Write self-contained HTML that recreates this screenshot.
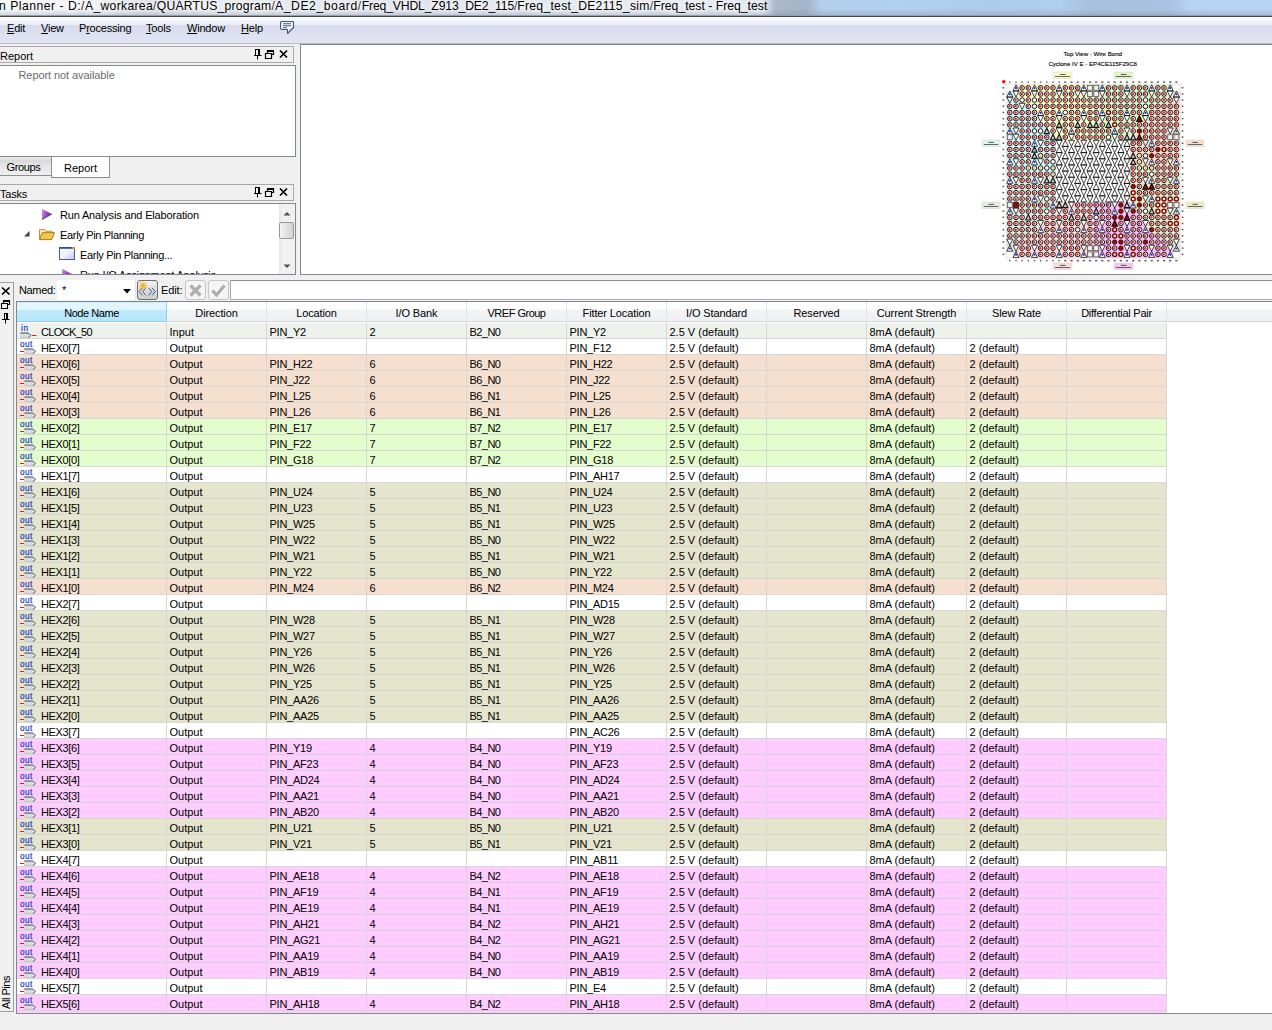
<!DOCTYPE html><html><head><meta charset="utf-8"><title>Pin Planner</title><style>
*{box-sizing:border-box;margin:0;padding:0}
html,body{width:1272px;height:1030px;overflow:hidden;background:#f0f0f0}
body{position:relative;font-family:"Liberation Sans",sans-serif;font-size:11px;color:#000;line-height:1}
.abs{position:absolute}
#title{left:0;top:0;width:1272px;height:16px;background:linear-gradient(rgba(255,255,255,0) 0,rgba(255,255,255,0) 9px,rgba(120,135,155,0.35) 16px),linear-gradient(90deg,#f7f8fa 0,#f1f3f6 90px,#dfe3e9 135px,#d9dee5 165px,#e9ecf0 200px,#e4e8ee 300px,#dde3ec 420px,#e3e8ef 560px,#e6eaf0 700px,#dde4ee 762px,#a9b8ca 776px,#a3b4c9 806px,#b3cfec 822px,#b2d0f0 900px,#adcbeb 990px,#b0ceee 1060px,#a7c1de 1090px,#a9c4e2 1170px,#b6d3f2 1190px,#b7d4f3 1272px)}
#title span{position:absolute;top:-0.2px;font-size:12.2px;white-space:pre;color:#000;text-shadow:0 0 6px #fff,0 0 6px #fff,0 0 9px #fff}
#titleline{left:0;top:15px;width:1272px;height:2px;background:linear-gradient(#a3adba 0,#8a94a2 45%,#3d424c 55%,#484d57 100%)}
#menu{left:0;top:17px;width:1272px;height:26px;background:linear-gradient(#ffffff 0,#f4f5fa 4px,#e9ebf5 8px,#d7dbed 8.5px,#dadeee 14px,#e2e5f3 26px)}
#menu span{position:absolute;top:6px;font-size:11px;white-space:nowrap;letter-spacing:-0.2px}
#menu u{text-decoration:underline}
#menuline{left:0;top:43px;width:1272px;height:1px;background:#b9bdc9}
.hdr{border:1px solid #a9a9a9;background:#f0f0f0}
.hdr span{position:absolute;left:0;top:4px;font-size:11px}
.box{border:1px solid #828790;background:#fff}
.tab{border:1px solid #8c8e94;font-size:11px;text-align:center}
.ico{position:absolute}
.tree span{position:absolute;font-size:11px;white-space:nowrap}
/* table */
.thead{position:absolute;left:17px;top:302px;width:1255px;height:20px;background:linear-gradient(#fff 0,#fff 7px,#f3f4f6 8px,#eff0f3 19px);border-bottom:1px solid #d5d5d5}
.th{position:absolute;top:0;height:19px;border-right:1px solid #e2e3e6;text-align:center}
.th span{position:absolute;left:0;right:0;top:6px;font-size:11px;letter-spacing:-0.12px}
.th.sel{background:linear-gradient(#e3f6fd 0,#dff4fc 6.500px,#bfe9fb 7.500px,#b5e4f9 19px);border-right:1px solid #8fcdeb;border-bottom:1px solid #8fcdeb;border-top:1px solid #c9ecfa;height:20px}
.th.sel span{top:5px;letter-spacing:-0.45px}
.tr{position:absolute;left:17px;width:1150px;border-right:1px solid #d6d6d6;height:16px;border-bottom:1px solid #d6d6d6;overflow:hidden}
.tr.part{border-bottom:none}
.td{position:absolute;top:0;height:16px;padding:4px 0 0 2.5px;border-left:1px solid #d6d6d6;font-size:11px;white-space:nowrap;overflow:hidden}
.nm{position:absolute;left:24px;top:4px;font-size:11px;white-space:nowrap;letter-spacing:-0.35px}
.ic{position:absolute;left:3px;top:0;width:18px;height:16px;overflow:hidden}
.chip{position:absolute}
</style></head><body>
<svg width="0" height="0" style="position:absolute"><defs><linearGradient id="pg" x1="0" y1="0" x2="1" y2="0.300"><stop offset="0" stop-color="#cf9ce6"/><stop offset="0.5" stop-color="#a050c4"/><stop offset="1" stop-color="#7a2aa0"/></linearGradient><linearGradient id="wg" x1="0" y1="0" x2="1" y2="1"><stop offset="0" stop-color="#ffffff"/><stop offset="0.5" stop-color="#eef0fb"/><stop offset="1" stop-color="#bcc6ee"/></linearGradient><linearGradient id="ag" x1="0" y1="0" x2="0" y2="1"><stop offset="0" stop-color="#aeb3b9"/><stop offset="0.45" stop-color="#e2e3e4"/><stop offset="1" stop-color="#c2c4c6"/></linearGradient><symbol id="iout" viewBox="0 0 18 16"><text x="0" y="7.800" font-family="Liberation Sans, sans-serif" font-size="8.2" fill="#1c38c4" stroke="#1c38c4" stroke-width="0.2" letter-spacing="0.45">out</text><rect x="0" y="12" width="4" height="1" fill="#e81c1c"/><path d="M4 9.500H12.700L16 12.400L12.700 15.300H4Z" fill="url(#ag)"/><path d="M4.500 10H12.500L15.700 12.400L12.700 15" fill="none" stroke="#4e5a6c" stroke-width="0.900"/></symbol><symbol id="iin" viewBox="0 0 18 16"><text x="1" y="7.800" font-family="Liberation Sans, sans-serif" font-size="8.2" fill="#1c38c4" stroke="#1c38c4" stroke-width="0.2" letter-spacing="0.8">in</text><rect x="12" y="12" width="4.500" height="1" fill="#e81c1c"/><path d="M0 9.500H8.200L11.500 12.400L8.200 15.300H0Z" fill="url(#ag)"/><path d="M0.500 10H8L11.200 12.400L8.200 15" fill="none" stroke="#4e5a6c" stroke-width="0.900"/></symbol></defs></svg>
<div id="title" class="abs"><span style="left:-1.0px;letter-spacing:0.495px">n Planner - D:/</span><span style="left:85px;letter-spacing:0.298px">A_workarea/</span><span style="left:156.7px;letter-spacing:0.211px">QUARTUS_program/</span><span style="left:275px;letter-spacing:0.562px">A_DE2_board/</span><span style="left:361.7px;letter-spacing:-0.147px">Freq_VHDL_Z913_DE2_115/</span><span style="left:517.3px;letter-spacing:0.261px">Freq_test_DE2115_sim/</span><span style="left:653.3px;letter-spacing:0.01px">Freq_test - Freq_test</span></div>
<div id="titleline" class="abs"></div>
<div id="menu" class="abs"><span style="left:7px"><u>E</u>dit</span><span style="left:41px"><u>V</u>iew</span><span style="left:79px">P<u>r</u>ocessing</span><span style="left:146px"><u>T</u>ools</span><span style="left:187px"><u>W</u>indow</span><span style="left:241px"><u>H</u>elp</span><svg class="ico" style="left:280px;top:3.500px" width="15" height="14" viewBox="0 0 15 14"><path d="M2 0.500H12.500Q13.500 0.500 13.500 1.500V6.500L7.500 12.500V8.500H2Q0.500 8.500 0.500 7V2Q0.500 0.500 2 0.500Z" fill="#eef1fb" stroke="#3f5872" stroke-width="1.100" stroke-linejoin="round"/><path d="M3 2.700H11M3 4.700H11M3 6.700H7" stroke="#3f5872" stroke-width="0.900"/></svg></div>
<div id="menuline" class="abs"></div>
<div class="abs hdr" style="left:-1px;top:46px;width:295px;height:17px"><span style="left:0px">Report</span></div>
<svg class="ico" style="left:253px;top:48px" width="36" height="12" viewBox="0 0 36 12"><path d="M2.5 2v5.5M2 1.5h5M1 7.5h7.5M4.5 8v3.5" fill="none" stroke="#000" stroke-width="1"/><rect x="5" y="1" width="2" height="6.5" fill="#000"/><path d="M14.5 2.5h6v4h-6zM14.5 3.5h6" fill="none" stroke="#000" stroke-width="1.2"/><path d="M12.5 5.5h6v5h-6z" fill="#f0f0f0" stroke="#000" stroke-width="1.2"/><path d="M27 2.5l7 7M34 2.5l-7 7" stroke="#000" stroke-width="1.7" fill="none"/></svg>
<div class="abs box" style="left:-1px;top:65px;width:297px;height:92px"><span style="position:absolute;left:18.5px;top:4px;font-size:11px;color:#6d6d6d;letter-spacing:-0.08px">Report not available</span></div>
<div class="abs tab" style="left:-1px;top:157px;width:53px;height:19px;background:linear-gradient(#ececec 0,#d9d9d9 4px,#e4e4e4 8px,#efefef 18px);border-top:none;padding:5px 4px 0 0;letter-spacing:-0.35px">Groups</div>
<div class="abs tab" style="left:51px;top:156px;width:59px;height:22px;background:#fff;padding-top:6px">Report</div>
<div class="abs hdr" style="left:-1px;top:184px;width:295px;height:17px"><span style="left:0px;letter-spacing:-0.2px">Tasks</span></div>
<svg class="ico" style="left:253px;top:186px" width="36" height="12" viewBox="0 0 36 12"><path d="M2.5 2v5.5M2 1.5h5M1 7.5h7.5M4.5 8v3.5" fill="none" stroke="#000" stroke-width="1"/><rect x="5" y="1" width="2" height="6.5" fill="#000"/><path d="M14.5 2.5h6v4h-6zM14.5 3.5h6" fill="none" stroke="#000" stroke-width="1.2"/><path d="M12.5 5.5h6v5h-6z" fill="#f0f0f0" stroke="#000" stroke-width="1.2"/><path d="M27 2.5l7 7M34 2.5l-7 7" stroke="#000" stroke-width="1.7" fill="none"/></svg>
<div class="abs box tree" style="left:-1px;top:203px;width:297px;height:72px;overflow:hidden"><svg class="ico" style="left:41px;top:4px" width="12" height="13" viewBox="0 0 12 13"><path d="M1 0.800v10.700l9.800-5.600z" fill="url(#pg)"/><path d="M1 11.500l9.800-5.600" stroke="#3c3f55" stroke-width="1.100" opacity="0.75"/></svg><span style="left:60px;top:6px;letter-spacing:-0.17px">Run Analysis and Elaboration</span><svg class="ico" style="left:23px;top:26px" width="8" height="8" viewBox="0 0 8 8"><path d="M6.5 1v5.5h-5.500z" fill="#404040"/></svg><svg class="ico" style="left:39px;top:23.500px" width="16" height="13" viewBox="0 0 17 14"><path d="M0.500 12.500v-11h5l1.500 2h7v2" fill="#fbeeb0" stroke="#b08a30" stroke-width="1"/><path d="M0.500 12.500l3-7.500h13l-3 7.500z" fill="#f5c84a" stroke="#9a7420" stroke-width="1"/></svg><span style="left:60px;top:26px;letter-spacing:-0.33px">Early Pin Planning</span><svg class="ico" style="left:59px;top:43px" width="17" height="14" viewBox="0 0 17 14"><rect x="0.500" y="0.500" width="15" height="12" fill="url(#wg)" stroke="#4a5a92"/><rect x="0.500" y="0" width="15" height="1.800" fill="#2a4cc0"/><rect x="13" y="0" width="3" height="2" fill="#f08020"/></svg><span style="left:80px;top:46px;letter-spacing:-0.33px">Early Pin Planning...</span><svg class="ico" style="left:61px;top:64px" width="12" height="13" viewBox="0 0 12 13"><path d="M1 0.800v10.700l9.800-5.600z" fill="url(#pg)"/></svg><span style="left:80px;top:66px;letter-spacing:-0.2px">Run I/O Assignment Analysis</span><div style="position:absolute;left:279px;top:0;width:16px;height:70px;background:linear-gradient(90deg,#e6e6e6,#f2f2f2 4px,#f0f0f0)"></div><svg class="ico" style="left:283px;top:6.500px" width="8" height="5" viewBox="0 0 8 5"><path d="M0.500 4.500l3.500-3.500 3.500 3.500z" fill="#505050"/></svg><div style="position:absolute;left:279px;top:18px;width:15px;height:17px;border:1px solid #9a9a9a;border-radius:2px;background:linear-gradient(90deg,#f4f4f4,#e2e2e2 50%,#d2d2d2)"></div><svg class="ico" style="left:283px;top:60px" width="8" height="5" viewBox="0 0 8 5"><path d="M0.500 0.500l3.500 3.500 3.500-3.500z" fill="#505050"/></svg></div>
<div class="abs" style="left:300px;top:44px;width:972px;height:231px;background:#fff;border-left:1px solid #828790;border-top:1px solid #828790;border-bottom:1px solid #828790"></div>
<svg class="chip" style="left:975px;top:44px" width="250" height="232" viewBox="975 44 250 232">
<rect x="1006.1" y="84.1" width="174.0" height="174.0" fill="#fff" stroke="#c8c8c8" stroke-width="0.6"/>
<polygon points="1012.9,84.4 1093.1,84.4 1093.1,140.2 1056.1,140.2 1037.6,112.5 1019.1,100.1 1012.9,90.9" fill="#f8f8c6"/>
<polygon points="1006.4,90.9 1012.9,90.9 1019.1,100.1 1037.6,112.5 1056.1,140.2 1056.1,171.1 1006.4,171.1" fill="#d6f3f3"/>
<polygon points="1093.1,84.4 1173.3,84.4 1173.3,90.9 1167.1,100.1 1148.6,112.5 1130.1,140.2 1093.1,140.2" fill="#dcf3c8"/>
<polygon points="1179.8,90.9 1173.3,90.9 1167.1,100.1 1148.6,112.5 1130.1,140.2 1130.1,171.1 1179.8,171.1" fill="#f6dcc8"/>
<polygon points="1006.4,171.1 1056.1,171.1 1056.1,201.9 1037.6,229.7 1019.1,242.1 1012.9,251.3 1006.4,251.3" fill="#dfe8dc"/>
<polygon points="1012.9,257.8 1093.1,257.8 1093.1,201.9 1056.1,201.9 1037.6,229.7 1019.1,242.1 1012.9,251.3" fill="#f9d8d8"/>
<polygon points="1093.1,257.8 1173.3,257.8 1173.3,251.3 1167.1,242.1 1148.6,229.7 1130.1,201.9 1093.1,201.9" fill="#f6c0f6"/>
<polygon points="1179.8,171.1 1130.1,171.1 1130.1,201.9 1148.6,229.7 1167.1,242.1 1173.3,251.3 1179.8,251.3" fill="#e6e6c8"/>
<g fill="#fff" stroke="#000" stroke-width="0.9"><circle cx="1022.1" cy="87.8" r="2.3"/><circle cx="1028.3" cy="87.8" r="2.3"/><circle cx="1040.6" cy="87.8" r="2.3"/><circle cx="1046.8" cy="87.8" r="2.3"/><circle cx="1053.0" cy="87.8" r="2.3"/><circle cx="1065.3" cy="87.8" r="2.3"/><circle cx="1071.5" cy="87.8" r="2.3"/><circle cx="1077.7" cy="87.8" r="2.3"/><circle cx="1108.5" cy="87.8" r="2.3"/><circle cx="1114.7" cy="87.8" r="2.3"/><circle cx="1120.9" cy="87.8" r="2.3"/><circle cx="1133.2" cy="87.8" r="2.3"/><circle cx="1139.4" cy="87.8" r="2.3"/><circle cx="1145.5" cy="87.8" r="2.3"/><circle cx="1157.9" cy="87.8" r="2.3"/><circle cx="1164.0" cy="87.8" r="2.3"/><circle cx="1022.1" cy="94.0" r="2.3"/><circle cx="1028.3" cy="94.0" r="2.3"/><circle cx="1040.6" cy="94.0" r="2.3"/><circle cx="1046.8" cy="94.0" r="2.3"/><circle cx="1053.0" cy="94.0" r="2.3"/><circle cx="1065.3" cy="94.0" r="2.3"/><circle cx="1071.5" cy="94.0" r="2.3"/><circle cx="1108.5" cy="94.0" r="2.3"/><circle cx="1114.7" cy="94.0" r="2.3"/><circle cx="1120.9" cy="94.0" r="2.3"/><circle cx="1133.2" cy="94.0" r="2.3"/><circle cx="1139.4" cy="94.0" r="2.3"/><circle cx="1145.5" cy="94.0" r="2.3"/><circle cx="1157.9" cy="94.0" r="2.3"/><circle cx="1164.0" cy="94.0" r="2.3"/><circle cx="1016.0" cy="100.1" r="2.3"/><circle cx="1022.1" cy="100.1" r="2.3"/><circle cx="1028.3" cy="100.1" r="2.3"/><circle cx="1034.5" cy="100.1" r="2.3"/><circle cx="1040.6" cy="100.1" r="2.3"/><circle cx="1046.8" cy="100.1" r="2.3"/><circle cx="1053.0" cy="100.1" r="2.3"/><circle cx="1059.2" cy="100.1" r="2.3"/><circle cx="1065.3" cy="100.1" r="2.3"/><circle cx="1071.5" cy="100.1" r="2.3"/><circle cx="1077.7" cy="100.1" r="2.3"/><circle cx="1083.8" cy="100.1" r="2.3"/><circle cx="1090.0" cy="100.1" r="2.3"/><circle cx="1096.2" cy="100.1" r="2.3"/><circle cx="1102.3" cy="100.1" r="2.3"/><circle cx="1108.5" cy="100.1" r="2.3"/><circle cx="1114.7" cy="100.1" r="2.3"/><circle cx="1120.9" cy="100.1" r="2.3"/><circle cx="1127.0" cy="100.1" r="2.3"/><circle cx="1133.2" cy="100.1" r="2.3"/><circle cx="1139.4" cy="100.1" r="2.3"/><circle cx="1145.5" cy="100.1" r="2.3"/><circle cx="1151.7" cy="100.1" r="2.3"/><circle cx="1157.9" cy="100.1" r="2.3"/><circle cx="1164.0" cy="100.1" r="2.3"/><circle cx="1170.2" cy="100.1" r="2.3"/><circle cx="1009.8" cy="106.3" r="2.3"/><circle cx="1016.0" cy="106.3" r="2.3"/><circle cx="1028.3" cy="106.3" r="2.3"/><circle cx="1034.5" cy="106.3" r="2.3"/><circle cx="1040.6" cy="106.3" r="2.3"/><circle cx="1046.8" cy="106.3" r="2.3"/><circle cx="1053.0" cy="106.3" r="2.3"/><circle cx="1059.2" cy="106.3" r="2.3"/><circle cx="1065.3" cy="106.3" r="2.3"/><circle cx="1071.5" cy="106.3" r="2.3"/><circle cx="1077.7" cy="106.3" r="2.3"/><circle cx="1083.8" cy="106.3" r="2.3"/><circle cx="1090.0" cy="106.3" r="2.3"/><circle cx="1096.2" cy="106.3" r="2.3"/><circle cx="1102.3" cy="106.3" r="2.3"/><circle cx="1108.5" cy="106.3" r="2.3"/><circle cx="1114.7" cy="106.3" r="2.3"/><circle cx="1120.9" cy="106.3" r="2.3"/><circle cx="1127.0" cy="106.3" r="2.3"/><circle cx="1133.2" cy="106.3" r="2.3"/><circle cx="1139.4" cy="106.3" r="2.3"/><circle cx="1145.5" cy="106.3" r="2.3"/><circle cx="1151.7" cy="106.3" r="2.3"/><circle cx="1157.9" cy="106.3" r="2.3"/><circle cx="1164.0" cy="106.3" r="2.3"/><circle cx="1170.2" cy="106.3" r="2.3"/><circle cx="1176.4" cy="106.3" r="2.3"/><circle cx="1009.8" cy="112.5" r="2.3"/><circle cx="1016.0" cy="112.5" r="2.3"/><circle cx="1022.1" cy="112.5" r="2.3"/><circle cx="1028.3" cy="112.5" r="2.3"/><circle cx="1034.5" cy="112.5" r="2.3"/><circle cx="1046.8" cy="112.5" r="2.3"/><circle cx="1053.0" cy="112.5" r="2.3"/><circle cx="1065.3" cy="112.5" r="2.3"/><circle cx="1071.5" cy="112.5" r="2.3"/><circle cx="1077.7" cy="112.5" r="2.3"/><circle cx="1090.0" cy="112.5" r="2.3"/><circle cx="1096.2" cy="112.5" r="2.3"/><circle cx="1114.7" cy="112.5" r="2.3"/><circle cx="1120.9" cy="112.5" r="2.3"/><circle cx="1133.2" cy="112.5" r="2.3"/><circle cx="1139.4" cy="112.5" r="2.3"/><circle cx="1151.7" cy="112.5" r="2.3"/><circle cx="1157.9" cy="112.5" r="2.3"/><circle cx="1164.0" cy="112.5" r="2.3"/><circle cx="1170.2" cy="112.5" r="2.3"/><circle cx="1176.4" cy="112.5" r="2.3"/><circle cx="1009.8" cy="118.7" r="2.3"/><circle cx="1016.0" cy="118.7" r="2.3"/><circle cx="1022.1" cy="118.7" r="2.3"/><circle cx="1028.3" cy="118.7" r="2.3"/><circle cx="1034.5" cy="118.7" r="2.3"/><circle cx="1046.8" cy="118.7" r="2.3"/><circle cx="1053.0" cy="118.7" r="2.3"/><circle cx="1065.3" cy="118.7" r="2.3"/><circle cx="1071.5" cy="118.7" r="2.3"/><circle cx="1077.7" cy="118.7" r="2.3"/><circle cx="1090.0" cy="118.7" r="2.3"/><circle cx="1096.2" cy="118.7" r="2.3"/><circle cx="1108.5" cy="118.7" r="2.3"/><circle cx="1114.7" cy="118.7" r="2.3"/><circle cx="1120.9" cy="118.7" r="2.3"/><circle cx="1133.2" cy="118.7" r="2.3"/><circle cx="1151.7" cy="118.7" r="2.3"/><circle cx="1157.9" cy="118.7" r="2.3"/><circle cx="1164.0" cy="118.7" r="2.3"/><circle cx="1170.2" cy="118.7" r="2.3"/><circle cx="1176.4" cy="118.7" r="2.3"/><circle cx="1009.8" cy="124.8" r="2.3"/><circle cx="1016.0" cy="124.8" r="2.3"/><circle cx="1022.1" cy="124.8" r="2.3"/><circle cx="1028.3" cy="124.8" r="2.3"/><circle cx="1034.5" cy="124.8" r="2.3"/><circle cx="1040.6" cy="124.8" r="2.3"/><circle cx="1046.8" cy="124.8" r="2.3"/><circle cx="1053.0" cy="124.8" r="2.3"/><circle cx="1065.3" cy="124.8" r="2.3"/><circle cx="1071.5" cy="124.8" r="2.3"/><circle cx="1083.8" cy="124.8" r="2.3"/><circle cx="1102.3" cy="124.8" r="2.3"/><circle cx="1120.9" cy="124.8" r="2.3"/><circle cx="1127.0" cy="124.8" r="2.3"/><circle cx="1133.2" cy="124.8" r="2.3"/><circle cx="1139.4" cy="124.8" r="2.3"/><circle cx="1145.5" cy="124.8" r="2.3"/><circle cx="1151.7" cy="124.8" r="2.3"/><circle cx="1157.9" cy="124.8" r="2.3"/><circle cx="1164.0" cy="124.8" r="2.3"/><circle cx="1170.2" cy="124.8" r="2.3"/><circle cx="1176.4" cy="124.8" r="2.3"/><circle cx="1022.1" cy="131.0" r="2.3"/><circle cx="1028.3" cy="131.0" r="2.3"/><circle cx="1034.5" cy="131.0" r="2.3"/><circle cx="1040.6" cy="131.0" r="2.3"/><circle cx="1053.0" cy="131.0" r="2.3"/><circle cx="1065.3" cy="131.0" r="2.3"/><circle cx="1077.7" cy="131.0" r="2.3"/><circle cx="1083.8" cy="131.0" r="2.3"/><circle cx="1090.0" cy="131.0" r="2.3"/><circle cx="1096.2" cy="131.0" r="2.3"/><circle cx="1102.3" cy="131.0" r="2.3"/><circle cx="1108.5" cy="131.0" r="2.3"/><circle cx="1120.9" cy="131.0" r="2.3"/><circle cx="1133.2" cy="131.0" r="2.3"/><circle cx="1145.5" cy="131.0" r="2.3"/><circle cx="1151.7" cy="131.0" r="2.3"/><circle cx="1157.9" cy="131.0" r="2.3"/><circle cx="1164.0" cy="131.0" r="2.3"/><circle cx="1022.1" cy="137.2" r="2.3"/><circle cx="1028.3" cy="137.2" r="2.3"/><circle cx="1034.5" cy="137.2" r="2.3"/><circle cx="1040.6" cy="137.2" r="2.3"/><circle cx="1046.8" cy="137.2" r="2.3"/><circle cx="1065.3" cy="137.2" r="2.3"/><circle cx="1077.7" cy="137.2" r="2.3"/><circle cx="1083.8" cy="137.2" r="2.3"/><circle cx="1090.0" cy="137.2" r="2.3"/><circle cx="1096.2" cy="137.2" r="2.3"/><circle cx="1102.3" cy="137.2" r="2.3"/><circle cx="1108.5" cy="137.2" r="2.3"/><circle cx="1120.9" cy="137.2" r="2.3"/><circle cx="1145.5" cy="137.2" r="2.3"/><circle cx="1151.7" cy="137.2" r="2.3"/><circle cx="1157.9" cy="137.2" r="2.3"/><circle cx="1164.0" cy="137.2" r="2.3"/><circle cx="1009.8" cy="143.3" r="2.3"/><circle cx="1016.0" cy="143.3" r="2.3"/><circle cx="1022.1" cy="143.3" r="2.3"/><circle cx="1028.3" cy="143.3" r="2.3"/><circle cx="1046.8" cy="143.3" r="2.3"/><circle cx="1053.0" cy="143.3" r="2.3"/><circle cx="1133.2" cy="143.3" r="2.3"/><circle cx="1139.4" cy="143.3" r="2.3"/><circle cx="1157.9" cy="143.3" r="2.3"/><circle cx="1164.0" cy="143.3" r="2.3"/><circle cx="1170.2" cy="143.3" r="2.3"/><circle cx="1176.4" cy="143.3" r="2.3"/><circle cx="1009.8" cy="149.5" r="2.3"/><circle cx="1016.0" cy="149.5" r="2.3"/><circle cx="1022.1" cy="149.5" r="2.3"/><circle cx="1028.3" cy="149.5" r="2.3"/><circle cx="1040.6" cy="149.5" r="2.3"/><circle cx="1046.8" cy="149.5" r="2.3"/><circle cx="1053.0" cy="149.5" r="2.3"/><circle cx="1133.2" cy="149.5" r="2.3"/><circle cx="1139.4" cy="149.5" r="2.3"/><circle cx="1145.5" cy="149.5" r="2.3"/><circle cx="1151.7" cy="149.5" r="2.3"/><circle cx="1170.2" cy="149.5" r="2.3"/><circle cx="1176.4" cy="149.5" r="2.3"/><circle cx="1009.8" cy="155.7" r="2.3"/><circle cx="1016.0" cy="155.7" r="2.3"/><circle cx="1022.1" cy="155.7" r="2.3"/><circle cx="1028.3" cy="155.7" r="2.3"/><circle cx="1040.6" cy="155.7" r="2.3"/><circle cx="1046.8" cy="155.7" r="2.3"/><circle cx="1053.0" cy="155.7" r="2.3"/><circle cx="1139.4" cy="155.7" r="2.3"/><circle cx="1145.5" cy="155.7" r="2.3"/><circle cx="1157.9" cy="155.7" r="2.3"/><circle cx="1164.0" cy="155.7" r="2.3"/><circle cx="1170.2" cy="155.7" r="2.3"/><circle cx="1176.4" cy="155.7" r="2.3"/><circle cx="1022.1" cy="161.8" r="2.3"/><circle cx="1028.3" cy="161.8" r="2.3"/><circle cx="1046.8" cy="161.8" r="2.3"/><circle cx="1053.0" cy="161.8" r="2.3"/><circle cx="1139.4" cy="161.8" r="2.3"/><circle cx="1157.9" cy="161.8" r="2.3"/><circle cx="1164.0" cy="161.8" r="2.3"/><circle cx="1009.8" cy="168.0" r="2.3"/><circle cx="1016.0" cy="168.0" r="2.3"/><circle cx="1022.1" cy="168.0" r="2.3"/><circle cx="1028.3" cy="168.0" r="2.3"/><circle cx="1034.5" cy="168.0" r="2.3"/><circle cx="1040.6" cy="168.0" r="2.3"/><circle cx="1046.8" cy="168.0" r="2.3"/><circle cx="1053.0" cy="168.0" r="2.3"/><circle cx="1133.2" cy="168.0" r="2.3"/><circle cx="1139.4" cy="168.0" r="2.3"/><circle cx="1145.5" cy="168.0" r="2.3"/><circle cx="1151.7" cy="168.0" r="2.3"/><circle cx="1157.9" cy="168.0" r="2.3"/><circle cx="1164.0" cy="168.0" r="2.3"/><circle cx="1170.2" cy="168.0" r="2.3"/><circle cx="1176.4" cy="168.0" r="2.3"/><circle cx="1009.8" cy="174.2" r="2.3"/><circle cx="1016.0" cy="174.2" r="2.3"/><circle cx="1022.1" cy="174.2" r="2.3"/><circle cx="1028.3" cy="174.2" r="2.3"/><circle cx="1034.5" cy="174.2" r="2.3"/><circle cx="1040.6" cy="174.2" r="2.3"/><circle cx="1046.8" cy="174.2" r="2.3"/><circle cx="1053.0" cy="174.2" r="2.3"/><circle cx="1133.2" cy="174.2" r="2.3"/><circle cx="1139.4" cy="174.2" r="2.3"/><circle cx="1145.5" cy="174.2" r="2.3"/><circle cx="1151.7" cy="174.2" r="2.3"/><circle cx="1157.9" cy="174.2" r="2.3"/><circle cx="1164.0" cy="174.2" r="2.3"/><circle cx="1170.2" cy="174.2" r="2.3"/><circle cx="1176.4" cy="174.2" r="2.3"/><circle cx="1022.1" cy="180.3" r="2.3"/><circle cx="1028.3" cy="180.3" r="2.3"/><circle cx="1133.2" cy="180.3" r="2.3"/><circle cx="1139.4" cy="180.3" r="2.3"/><circle cx="1157.9" cy="180.3" r="2.3"/><circle cx="1164.0" cy="180.3" r="2.3"/><circle cx="1009.8" cy="186.5" r="2.3"/><circle cx="1016.0" cy="186.5" r="2.3"/><circle cx="1022.1" cy="186.5" r="2.3"/><circle cx="1028.3" cy="186.5" r="2.3"/><circle cx="1034.5" cy="186.5" r="2.3"/><circle cx="1040.6" cy="186.5" r="2.3"/><circle cx="1046.8" cy="186.5" r="2.3"/><circle cx="1053.0" cy="186.5" r="2.3"/><circle cx="1139.4" cy="186.5" r="2.3"/><circle cx="1157.9" cy="186.5" r="2.3"/><circle cx="1164.0" cy="186.5" r="2.3"/><circle cx="1170.2" cy="186.5" r="2.3"/><circle cx="1176.4" cy="186.5" r="2.3"/><circle cx="1009.8" cy="192.7" r="2.3"/><circle cx="1016.0" cy="192.7" r="2.3"/><circle cx="1022.1" cy="192.7" r="2.3"/><circle cx="1028.3" cy="192.7" r="2.3"/><circle cx="1034.5" cy="192.7" r="2.3"/><circle cx="1040.6" cy="192.7" r="2.3"/><circle cx="1046.8" cy="192.7" r="2.3"/><circle cx="1053.0" cy="192.7" r="2.3"/><circle cx="1139.4" cy="192.7" r="2.3"/><circle cx="1145.5" cy="192.7" r="2.3"/><circle cx="1151.7" cy="192.7" r="2.3"/><circle cx="1157.9" cy="192.7" r="2.3"/><circle cx="1164.0" cy="192.7" r="2.3"/><circle cx="1170.2" cy="192.7" r="2.3"/><circle cx="1176.4" cy="192.7" r="2.3"/><circle cx="1009.8" cy="198.9" r="2.3"/><circle cx="1016.0" cy="198.9" r="2.3"/><circle cx="1022.1" cy="198.9" r="2.3"/><circle cx="1028.3" cy="198.9" r="2.3"/><circle cx="1046.8" cy="198.9" r="2.3"/><circle cx="1053.0" cy="198.9" r="2.3"/><circle cx="1022.1" cy="205.0" r="2.3"/><circle cx="1028.3" cy="205.0" r="2.3"/><circle cx="1034.5" cy="205.0" r="2.3"/><circle cx="1040.6" cy="205.0" r="2.3"/><circle cx="1046.8" cy="205.0" r="2.3"/><circle cx="1077.7" cy="205.0" r="2.3"/><circle cx="1083.8" cy="205.0" r="2.3"/><circle cx="1090.0" cy="205.0" r="2.3"/><circle cx="1096.2" cy="205.0" r="2.3"/><circle cx="1102.3" cy="205.0" r="2.3"/><circle cx="1108.5" cy="205.0" r="2.3"/><circle cx="1145.5" cy="205.0" r="2.3"/><circle cx="1151.7" cy="205.0" r="2.3"/><circle cx="1022.1" cy="211.2" r="2.3"/><circle cx="1028.3" cy="211.2" r="2.3"/><circle cx="1034.5" cy="211.2" r="2.3"/><circle cx="1040.6" cy="211.2" r="2.3"/><circle cx="1046.8" cy="211.2" r="2.3"/><circle cx="1053.0" cy="211.2" r="2.3"/><circle cx="1065.3" cy="211.2" r="2.3"/><circle cx="1077.7" cy="211.2" r="2.3"/><circle cx="1083.8" cy="211.2" r="2.3"/><circle cx="1090.0" cy="211.2" r="2.3"/><circle cx="1102.3" cy="211.2" r="2.3"/><circle cx="1108.5" cy="211.2" r="2.3"/><circle cx="1139.4" cy="211.2" r="2.3"/><circle cx="1145.5" cy="211.2" r="2.3"/><circle cx="1009.8" cy="217.4" r="2.3"/><circle cx="1016.0" cy="217.4" r="2.3"/><circle cx="1022.1" cy="217.4" r="2.3"/><circle cx="1034.5" cy="217.4" r="2.3"/><circle cx="1040.6" cy="217.4" r="2.3"/><circle cx="1046.8" cy="217.4" r="2.3"/><circle cx="1053.0" cy="217.4" r="2.3"/><circle cx="1059.2" cy="217.4" r="2.3"/><circle cx="1065.3" cy="217.4" r="2.3"/><circle cx="1077.7" cy="217.4" r="2.3"/><circle cx="1090.0" cy="217.4" r="2.3"/><circle cx="1096.2" cy="217.4" r="2.3"/><circle cx="1102.3" cy="217.4" r="2.3"/><circle cx="1108.5" cy="217.4" r="2.3"/><circle cx="1133.2" cy="217.4" r="2.3"/><circle cx="1139.4" cy="217.4" r="2.3"/><circle cx="1145.5" cy="217.4" r="2.3"/><circle cx="1151.7" cy="217.4" r="2.3"/><circle cx="1157.9" cy="217.4" r="2.3"/><circle cx="1164.0" cy="217.4" r="2.3"/><circle cx="1170.2" cy="217.4" r="2.3"/><circle cx="1009.8" cy="223.5" r="2.3"/><circle cx="1016.0" cy="223.5" r="2.3"/><circle cx="1022.1" cy="223.5" r="2.3"/><circle cx="1028.3" cy="223.5" r="2.3"/><circle cx="1034.5" cy="223.5" r="2.3"/><circle cx="1046.8" cy="223.5" r="2.3"/><circle cx="1053.0" cy="223.5" r="2.3"/><circle cx="1065.3" cy="223.5" r="2.3"/><circle cx="1071.5" cy="223.5" r="2.3"/><circle cx="1077.7" cy="223.5" r="2.3"/><circle cx="1090.0" cy="223.5" r="2.3"/><circle cx="1096.2" cy="223.5" r="2.3"/><circle cx="1108.5" cy="223.5" r="2.3"/><circle cx="1120.9" cy="223.5" r="2.3"/><circle cx="1133.2" cy="223.5" r="2.3"/><circle cx="1139.4" cy="223.5" r="2.3"/><circle cx="1151.7" cy="223.5" r="2.3"/><circle cx="1157.9" cy="223.5" r="2.3"/><circle cx="1164.0" cy="223.5" r="2.3"/><circle cx="1009.8" cy="229.7" r="2.3"/><circle cx="1016.0" cy="229.7" r="2.3"/><circle cx="1022.1" cy="229.7" r="2.3"/><circle cx="1028.3" cy="229.7" r="2.3"/><circle cx="1034.5" cy="229.7" r="2.3"/><circle cx="1046.8" cy="229.7" r="2.3"/><circle cx="1053.0" cy="229.7" r="2.3"/><circle cx="1065.3" cy="229.7" r="2.3"/><circle cx="1071.5" cy="229.7" r="2.3"/><circle cx="1077.7" cy="229.7" r="2.3"/><circle cx="1090.0" cy="229.7" r="2.3"/><circle cx="1096.2" cy="229.7" r="2.3"/><circle cx="1108.5" cy="229.7" r="2.3"/><circle cx="1120.9" cy="229.7" r="2.3"/><circle cx="1133.2" cy="229.7" r="2.3"/><circle cx="1139.4" cy="229.7" r="2.3"/><circle cx="1157.9" cy="229.7" r="2.3"/><circle cx="1164.0" cy="229.7" r="2.3"/><circle cx="1170.2" cy="229.7" r="2.3"/><circle cx="1176.4" cy="229.7" r="2.3"/><circle cx="1009.8" cy="235.9" r="2.3"/><circle cx="1016.0" cy="235.9" r="2.3"/><circle cx="1022.1" cy="235.9" r="2.3"/><circle cx="1028.3" cy="235.9" r="2.3"/><circle cx="1034.5" cy="235.9" r="2.3"/><circle cx="1040.6" cy="235.9" r="2.3"/><circle cx="1046.8" cy="235.9" r="2.3"/><circle cx="1053.0" cy="235.9" r="2.3"/><circle cx="1059.2" cy="235.9" r="2.3"/><circle cx="1065.3" cy="235.9" r="2.3"/><circle cx="1071.5" cy="235.9" r="2.3"/><circle cx="1077.7" cy="235.9" r="2.3"/><circle cx="1083.8" cy="235.9" r="2.3"/><circle cx="1090.0" cy="235.9" r="2.3"/><circle cx="1096.2" cy="235.9" r="2.3"/><circle cx="1102.3" cy="235.9" r="2.3"/><circle cx="1108.5" cy="235.9" r="2.3"/><circle cx="1127.0" cy="235.9" r="2.3"/><circle cx="1133.2" cy="235.9" r="2.3"/><circle cx="1139.4" cy="235.9" r="2.3"/><circle cx="1145.5" cy="235.9" r="2.3"/><circle cx="1151.7" cy="235.9" r="2.3"/><circle cx="1157.9" cy="235.9" r="2.3"/><circle cx="1164.0" cy="235.9" r="2.3"/><circle cx="1170.2" cy="235.9" r="2.3"/><circle cx="1176.4" cy="235.9" r="2.3"/><circle cx="1016.0" cy="242.1" r="2.3"/><circle cx="1022.1" cy="242.1" r="2.3"/><circle cx="1028.3" cy="242.1" r="2.3"/><circle cx="1034.5" cy="242.1" r="2.3"/><circle cx="1040.6" cy="242.1" r="2.3"/><circle cx="1046.8" cy="242.1" r="2.3"/><circle cx="1053.0" cy="242.1" r="2.3"/><circle cx="1059.2" cy="242.1" r="2.3"/><circle cx="1065.3" cy="242.1" r="2.3"/><circle cx="1071.5" cy="242.1" r="2.3"/><circle cx="1077.7" cy="242.1" r="2.3"/><circle cx="1083.8" cy="242.1" r="2.3"/><circle cx="1090.0" cy="242.1" r="2.3"/><circle cx="1096.2" cy="242.1" r="2.3"/><circle cx="1102.3" cy="242.1" r="2.3"/><circle cx="1108.5" cy="242.1" r="2.3"/><circle cx="1127.0" cy="242.1" r="2.3"/><circle cx="1133.2" cy="242.1" r="2.3"/><circle cx="1139.4" cy="242.1" r="2.3"/><circle cx="1151.7" cy="242.1" r="2.3"/><circle cx="1157.9" cy="242.1" r="2.3"/><circle cx="1164.0" cy="242.1" r="2.3"/><circle cx="1170.2" cy="242.1" r="2.3"/><circle cx="1022.1" cy="248.2" r="2.3"/><circle cx="1028.3" cy="248.2" r="2.3"/><circle cx="1040.6" cy="248.2" r="2.3"/><circle cx="1046.8" cy="248.2" r="2.3"/><circle cx="1053.0" cy="248.2" r="2.3"/><circle cx="1065.3" cy="248.2" r="2.3"/><circle cx="1071.5" cy="248.2" r="2.3"/><circle cx="1077.7" cy="248.2" r="2.3"/><circle cx="1108.5" cy="248.2" r="2.3"/><circle cx="1114.7" cy="248.2" r="2.3"/><circle cx="1139.4" cy="248.2" r="2.3"/><circle cx="1145.5" cy="248.2" r="2.3"/><circle cx="1157.9" cy="248.2" r="2.3"/><circle cx="1164.0" cy="248.2" r="2.3"/><circle cx="1022.1" cy="254.4" r="2.3"/><circle cx="1028.3" cy="254.4" r="2.3"/><circle cx="1040.6" cy="254.4" r="2.3"/><circle cx="1046.8" cy="254.4" r="2.3"/><circle cx="1053.0" cy="254.4" r="2.3"/><circle cx="1065.3" cy="254.4" r="2.3"/><circle cx="1071.5" cy="254.4" r="2.3"/><circle cx="1077.7" cy="254.4" r="2.3"/><circle cx="1108.5" cy="254.4" r="2.3"/><circle cx="1139.4" cy="254.4" r="2.3"/><circle cx="1145.5" cy="254.4" r="2.3"/><circle cx="1157.9" cy="254.4" r="2.3"/><circle cx="1164.0" cy="254.4" r="2.3"/></g>
<path fill="#fff" stroke="#000" stroke-width="0.72" stroke-linejoin="miter" d="M1013.0 90.8L1016.0 84.8L1019.0 90.8ZM1031.5 90.8L1034.5 84.8L1037.5 90.8ZM1056.2 90.8L1059.2 84.8L1062.2 90.8ZM1080.8 90.8L1083.8 84.8L1086.8 90.8ZM1099.3 90.8L1102.3 84.8L1105.3 90.8ZM1124.0 90.8L1127.0 84.8L1130.0 90.8ZM1148.7 90.8L1151.7 84.8L1154.7 90.8ZM1167.2 90.8L1170.2 84.8L1173.2 90.8ZM1006.8 97.0L1009.8 91.0L1012.8 97.0ZM1013.0 91.0L1016.0 97.0L1019.0 91.0ZM1031.5 91.0L1034.5 97.0L1037.5 91.0ZM1056.2 91.0L1059.2 97.0L1062.2 91.0ZM1074.7 91.0L1077.7 97.0L1080.7 91.0ZM1080.8 91.0L1083.8 97.0L1086.8 91.0ZM1099.3 91.0L1102.3 97.0L1105.3 91.0ZM1124.0 91.0L1127.0 97.0L1130.0 91.0ZM1148.7 91.0L1151.7 97.0L1154.7 91.0ZM1167.2 91.0L1170.2 97.0L1173.2 91.0ZM1173.4 97.0L1176.4 91.0L1179.4 97.0ZM1006.8 97.1L1009.8 103.1L1012.8 97.1ZM1173.4 97.1L1176.4 103.1L1179.4 97.1ZM1019.1 103.3L1022.1 109.3L1025.1 103.3ZM1037.6 115.5L1040.6 109.5L1043.6 115.5ZM1056.2 115.5L1059.2 109.5L1062.2 115.5ZM1080.8 115.5L1083.8 109.5L1086.8 115.5ZM1099.3 115.5L1102.3 109.5L1105.3 115.5ZM1124.0 115.5L1127.0 109.5L1130.0 115.5ZM1142.5 115.5L1145.5 109.5L1148.5 115.5ZM1037.6 115.7L1040.6 121.7L1043.6 115.7ZM1056.2 115.7L1059.2 121.7L1062.2 115.7ZM1080.8 115.7L1083.8 121.7L1086.8 115.7ZM1099.3 115.7L1102.3 121.7L1105.3 115.7ZM1124.0 115.7L1127.0 121.7L1130.0 115.7ZM1142.5 115.7L1145.5 121.7L1148.5 115.7ZM1006.8 134.0L1009.8 128.0L1012.8 134.0ZM1013.0 128.0L1016.0 134.0L1019.0 128.0ZM1056.2 128.0L1059.2 134.0L1062.2 128.0ZM1068.5 134.0L1071.5 128.0L1074.5 134.0ZM1111.7 134.0L1114.7 128.0L1117.7 134.0ZM1124.0 128.0L1127.0 134.0L1130.0 128.0ZM1167.2 128.0L1170.2 134.0L1173.2 128.0ZM1173.4 134.0L1176.4 128.0L1179.4 134.0ZM1013.0 134.2L1016.0 140.2L1019.0 134.2ZM1068.5 134.2L1071.5 140.2L1074.5 134.2ZM1111.7 134.2L1114.7 140.2L1117.7 134.2ZM1031.5 146.3L1034.5 140.3L1037.5 146.3ZM1037.6 140.3L1040.6 146.3L1043.6 140.3ZM1056.2 140.3L1059.2 146.3L1062.2 140.3ZM1062.3 146.3L1065.3 140.3L1068.3 146.3ZM1068.5 140.3L1071.5 146.3L1074.5 140.3ZM1074.7 146.3L1077.7 140.3L1080.7 146.3ZM1080.8 140.3L1083.8 146.3L1086.8 140.3ZM1087.0 146.3L1090.0 140.3L1093.0 146.3ZM1093.2 140.3L1096.2 146.3L1099.2 140.3ZM1099.3 146.3L1102.3 140.3L1105.3 146.3ZM1105.5 140.3L1108.5 146.3L1111.5 140.3ZM1111.7 146.3L1114.7 140.3L1117.7 146.3ZM1117.9 140.3L1120.9 146.3L1123.9 140.3ZM1124.0 146.3L1127.0 140.3L1130.0 146.3ZM1142.5 140.3L1145.5 146.3L1148.5 140.3ZM1148.7 146.3L1151.7 140.3L1154.7 146.3ZM1056.2 152.5L1059.2 146.5L1062.2 152.5ZM1062.3 146.5L1065.3 152.5L1068.3 146.5ZM1068.5 152.5L1071.5 146.5L1074.5 152.5ZM1074.7 146.5L1077.7 152.5L1080.7 146.5ZM1080.8 152.5L1083.8 146.5L1086.8 152.5ZM1087.0 146.5L1090.0 152.5L1093.0 146.5ZM1093.2 152.5L1096.2 146.5L1099.2 152.5ZM1099.3 146.5L1102.3 152.5L1105.3 146.5ZM1105.5 152.5L1108.5 146.5L1111.5 152.5ZM1111.7 146.5L1114.7 152.5L1117.7 146.5ZM1117.9 152.5L1120.9 146.5L1123.9 152.5ZM1124.0 146.5L1127.0 152.5L1130.0 146.5ZM1056.2 152.7L1059.2 158.7L1062.2 152.7ZM1062.3 158.7L1065.3 152.7L1068.3 158.7ZM1068.5 152.7L1071.5 158.7L1074.5 152.7ZM1074.7 158.7L1077.7 152.7L1080.7 158.7ZM1080.8 152.7L1083.8 158.7L1086.8 152.7ZM1087.0 158.7L1090.0 152.7L1093.0 158.7ZM1093.2 152.7L1096.2 158.7L1099.2 152.7ZM1099.3 158.7L1102.3 152.7L1105.3 158.7ZM1105.5 152.7L1108.5 158.7L1111.5 152.7ZM1111.7 158.7L1114.7 152.7L1117.7 158.7ZM1117.9 152.7L1120.9 158.7L1123.9 152.7ZM1124.0 158.7L1127.0 152.7L1130.0 158.7ZM1006.8 164.8L1009.8 158.8L1012.8 164.8ZM1013.0 158.8L1016.0 164.8L1019.0 158.8ZM1031.5 164.8L1034.5 158.8L1037.5 164.8ZM1037.6 158.8L1040.6 164.8L1043.6 158.8ZM1056.2 164.8L1059.2 158.8L1062.2 164.8ZM1062.3 158.8L1065.3 164.8L1068.3 158.8ZM1068.5 164.8L1071.5 158.8L1074.5 164.8ZM1074.7 158.8L1077.7 164.8L1080.7 158.8ZM1080.8 164.8L1083.8 158.8L1086.8 164.8ZM1087.0 158.8L1090.0 164.8L1093.0 158.8ZM1093.2 164.8L1096.2 158.8L1099.2 164.8ZM1099.3 158.8L1102.3 164.8L1105.3 158.8ZM1105.5 164.8L1108.5 158.8L1111.5 164.8ZM1111.7 158.8L1114.7 164.8L1117.7 158.8ZM1117.9 164.8L1120.9 158.8L1123.9 164.8ZM1124.0 158.8L1127.0 164.8L1130.0 158.8ZM1142.5 158.8L1145.5 164.8L1148.5 158.8ZM1148.7 164.8L1151.7 158.8L1154.7 164.8ZM1167.2 158.8L1170.2 164.8L1173.2 158.8ZM1173.4 164.8L1176.4 158.8L1179.4 164.8ZM1056.2 165.0L1059.2 171.0L1062.2 165.0ZM1062.3 171.0L1065.3 165.0L1068.3 171.0ZM1068.5 165.0L1071.5 171.0L1074.5 165.0ZM1074.7 171.0L1077.7 165.0L1080.7 171.0ZM1080.8 165.0L1083.8 171.0L1086.8 165.0ZM1087.0 171.0L1090.0 165.0L1093.0 171.0ZM1093.2 165.0L1096.2 171.0L1099.2 165.0ZM1099.3 171.0L1102.3 165.0L1105.3 171.0ZM1105.5 165.0L1108.5 171.0L1111.5 165.0ZM1111.7 171.0L1114.7 165.0L1117.7 171.0ZM1117.9 165.0L1120.9 171.0L1123.9 165.0ZM1124.0 171.0L1127.0 165.0L1130.0 171.0ZM1056.2 177.2L1059.2 171.2L1062.2 177.2ZM1062.3 171.2L1065.3 177.2L1068.3 171.2ZM1068.5 177.2L1071.5 171.2L1074.5 177.2ZM1074.7 171.2L1077.7 177.2L1080.7 171.2ZM1080.8 177.2L1083.8 171.2L1086.8 177.2ZM1087.0 171.2L1090.0 177.2L1093.0 171.2ZM1093.2 177.2L1096.2 171.2L1099.2 177.2ZM1099.3 171.2L1102.3 177.2L1105.3 171.2ZM1105.5 177.2L1108.5 171.2L1111.5 177.2ZM1111.7 171.2L1114.7 177.2L1117.7 171.2ZM1117.9 177.2L1120.9 171.2L1123.9 177.2ZM1124.0 171.2L1127.0 177.2L1130.0 171.2ZM1006.8 183.3L1009.8 177.3L1012.8 183.3ZM1013.0 177.3L1016.0 183.3L1019.0 177.3ZM1031.5 183.3L1034.5 177.3L1037.5 183.3ZM1037.6 177.3L1040.6 183.3L1043.6 177.3ZM1056.2 177.3L1059.2 183.3L1062.2 177.3ZM1062.3 183.3L1065.3 177.3L1068.3 183.3ZM1068.5 177.3L1071.5 183.3L1074.5 177.3ZM1074.7 183.3L1077.7 177.3L1080.7 183.3ZM1080.8 177.3L1083.8 183.3L1086.8 177.3ZM1087.0 183.3L1090.0 177.3L1093.0 183.3ZM1093.2 177.3L1096.2 183.3L1099.2 177.3ZM1099.3 183.3L1102.3 177.3L1105.3 183.3ZM1105.5 177.3L1108.5 183.3L1111.5 177.3ZM1111.7 183.3L1114.7 177.3L1117.7 183.3ZM1117.9 177.3L1120.9 183.3L1123.9 177.3ZM1124.0 183.3L1127.0 177.3L1130.0 183.3ZM1142.5 177.3L1145.5 183.3L1148.5 177.3ZM1148.7 183.3L1151.7 177.3L1154.7 183.3ZM1167.2 177.3L1170.2 183.3L1173.2 177.3ZM1173.4 183.3L1176.4 177.3L1179.4 183.3ZM1056.2 189.5L1059.2 183.5L1062.2 189.5ZM1062.3 183.5L1065.3 189.5L1068.3 183.5ZM1068.5 189.5L1071.5 183.5L1074.5 189.5ZM1074.7 183.5L1077.7 189.5L1080.7 183.5ZM1080.8 189.5L1083.8 183.5L1086.8 189.5ZM1087.0 183.5L1090.0 189.5L1093.0 183.5ZM1093.2 189.5L1096.2 183.5L1099.2 189.5ZM1099.3 183.5L1102.3 189.5L1105.3 183.5ZM1105.5 189.5L1108.5 183.5L1111.5 189.5ZM1111.7 183.5L1114.7 189.5L1117.7 183.5ZM1117.9 189.5L1120.9 183.5L1123.9 189.5ZM1124.0 183.5L1127.0 189.5L1130.0 183.5ZM1056.2 189.7L1059.2 195.7L1062.2 189.7ZM1062.3 195.7L1065.3 189.7L1068.3 195.7ZM1068.5 189.7L1071.5 195.7L1074.5 189.7ZM1074.7 195.7L1077.7 189.7L1080.7 195.7ZM1080.8 189.7L1083.8 195.7L1086.8 189.7ZM1087.0 195.7L1090.0 189.7L1093.0 195.7ZM1093.2 189.7L1096.2 195.7L1099.2 189.7ZM1099.3 195.7L1102.3 189.7L1105.3 195.7ZM1105.5 189.7L1108.5 195.7L1111.5 189.7ZM1111.7 195.7L1114.7 189.7L1117.7 195.7ZM1117.9 189.7L1120.9 195.7L1123.9 189.7ZM1124.0 195.7L1127.0 189.7L1130.0 195.7ZM1031.5 201.9L1034.5 195.9L1037.5 201.9ZM1037.6 195.9L1040.6 201.9L1043.6 195.9ZM1056.2 201.9L1059.2 195.9L1062.2 201.9ZM1062.3 195.9L1065.3 201.9L1068.3 195.9ZM1068.5 201.9L1071.5 195.9L1074.5 201.9ZM1074.7 195.9L1077.7 201.9L1080.7 195.9ZM1080.8 201.9L1083.8 195.9L1086.8 201.9ZM1087.0 195.9L1090.0 201.9L1093.0 195.9ZM1093.2 201.9L1096.2 195.9L1099.2 201.9ZM1099.3 195.9L1102.3 201.9L1105.3 195.9ZM1105.5 201.9L1108.5 195.9L1111.5 201.9ZM1111.7 195.9L1114.7 201.9L1117.7 195.9ZM1117.9 201.9L1120.9 195.9L1123.9 201.9ZM1124.0 195.9L1127.0 201.9L1130.0 195.9ZM1142.5 195.9L1145.5 201.9L1148.5 195.9ZM1148.7 201.9L1151.7 195.9L1154.7 201.9ZM1050.0 208.0L1053.0 202.0L1056.0 208.0ZM1068.5 202.0L1071.5 208.0L1074.5 202.0ZM1111.7 202.0L1114.7 208.0L1117.7 202.0ZM1130.2 208.0L1133.2 202.0L1136.2 208.0ZM1006.8 214.2L1009.8 208.2L1012.8 214.2ZM1013.0 208.2L1016.0 214.2L1019.0 208.2ZM1056.2 208.2L1059.2 214.2L1062.2 208.2ZM1068.5 214.2L1071.5 208.2L1074.5 214.2ZM1111.7 214.2L1114.7 208.2L1117.7 214.2ZM1124.0 208.2L1127.0 214.2L1130.0 208.2ZM1167.2 208.2L1170.2 214.2L1173.2 208.2ZM1173.4 214.2L1176.4 208.2L1179.4 214.2ZM1037.6 220.5L1040.6 226.5L1043.6 220.5ZM1056.2 220.5L1059.2 226.5L1062.2 220.5ZM1080.8 220.5L1083.8 226.5L1086.8 220.5ZM1099.3 220.5L1102.3 226.5L1105.3 220.5ZM1124.0 220.5L1127.0 226.5L1130.0 220.5ZM1142.5 220.5L1145.5 226.5L1148.5 220.5ZM1037.6 232.7L1040.6 226.7L1043.6 232.7ZM1056.2 232.7L1059.2 226.7L1062.2 232.7ZM1080.8 232.7L1083.8 226.7L1086.8 232.7ZM1099.3 232.7L1102.3 226.7L1105.3 232.7ZM1124.0 232.7L1127.0 226.7L1130.0 232.7ZM1142.5 232.7L1145.5 226.7L1148.5 232.7ZM1006.8 239.1L1009.8 245.1L1012.8 239.1ZM1173.4 239.1L1176.4 245.1L1179.4 239.1ZM1006.8 251.2L1009.8 245.2L1012.8 251.2ZM1013.0 245.2L1016.0 251.2L1019.0 245.2ZM1031.5 245.2L1034.5 251.2L1037.5 245.2ZM1056.2 245.2L1059.2 251.2L1062.2 245.2ZM1080.8 245.2L1083.8 251.2L1086.8 245.2ZM1099.3 245.2L1102.3 251.2L1105.3 245.2ZM1124.0 245.2L1127.0 251.2L1130.0 245.2ZM1148.7 245.2L1151.7 251.2L1154.7 245.2ZM1167.2 245.2L1170.2 251.2L1173.2 245.2ZM1173.4 251.2L1176.4 245.2L1179.4 251.2ZM1013.0 257.4L1016.0 251.4L1019.0 257.4ZM1031.5 257.4L1034.5 251.4L1037.5 257.4ZM1056.2 257.4L1059.2 251.4L1062.2 257.4ZM1080.8 257.4L1083.8 251.4L1086.8 257.4ZM1099.3 257.4L1102.3 251.4L1105.3 257.4ZM1124.0 257.4L1127.0 251.4L1130.0 257.4ZM1148.7 257.4L1151.7 251.4L1154.7 257.4ZM1167.2 257.4L1170.2 251.4L1173.2 257.4Z"/>
<path fill="#c8c8c8" stroke="#1a1a1a" stroke-width="1.15" d="M1056.6 127.4L1059.2 122.0L1061.8 127.4ZM1075.1 127.4L1077.7 122.0L1080.3 127.4ZM1087.4 127.4L1090.0 122.0L1092.6 127.4ZM1093.6 127.4L1096.2 122.0L1098.8 127.4ZM1105.9 127.4L1108.5 122.0L1111.1 127.4ZM1044.2 133.6L1046.8 128.2L1049.4 133.6ZM1050.4 139.8L1053.0 134.4L1055.6 139.8ZM1056.6 139.8L1059.2 134.4L1061.8 139.8ZM1124.4 139.8L1127.0 134.4L1129.6 139.8ZM1130.6 139.8L1133.2 134.4L1135.8 139.8ZM1031.9 152.1L1034.5 146.7L1037.1 152.1ZM1031.9 158.3L1034.5 152.9L1037.1 158.3ZM1130.6 158.3L1133.2 152.9L1135.8 158.3ZM1130.6 164.4L1133.2 159.0L1135.8 164.4ZM1044.2 182.9L1046.8 177.5L1049.4 182.9ZM1050.4 182.9L1053.0 177.5L1055.6 182.9ZM1056.6 207.6L1059.2 202.2L1061.8 207.6ZM1062.7 207.6L1065.3 202.2L1067.9 207.6ZM1124.4 207.6L1127.0 202.2L1129.6 207.6ZM1093.6 213.8L1096.2 208.4L1098.8 213.8ZM1149.1 213.8L1151.7 208.4L1154.3 213.8ZM1025.7 220.0L1028.3 214.6L1030.9 220.0ZM1068.9 220.0L1071.5 214.6L1074.1 220.0ZM1081.2 220.0L1083.8 214.6L1086.4 220.0Z"/>
<path fill="#8c1008" stroke="#200" stroke-width="1.2" d="M1136.7 121.4L1139.4 115.8L1142.1 121.4ZM1136.7 139.9L1139.4 134.3L1142.1 139.9ZM1142.8 189.2L1145.5 183.6L1148.2 189.2ZM1149.0 189.2L1151.7 183.6L1154.4 189.2ZM1124.3 220.1L1127.0 214.5L1129.7 220.1ZM1112.0 226.2L1114.7 220.6L1117.4 226.2Z"/>
<g fill="#e8e8e8" stroke="#555" stroke-width="0.8"><rect x="1087.5" y="85.3" width="5" height="5"/><rect x="1093.7" y="85.3" width="5" height="5"/><rect x="1087.5" y="91.5" width="5" height="5"/><rect x="1093.7" y="91.5" width="5" height="5"/><rect x="1007.3" y="134.7" width="5" height="5"/><rect x="1167.7" y="134.7" width="5" height="5"/><rect x="1173.9" y="134.7" width="5" height="5"/><rect x="1007.3" y="202.5" width="5" height="5"/><rect x="1167.7" y="202.5" width="5" height="5"/><rect x="1173.9" y="202.5" width="5" height="5"/><rect x="1087.5" y="245.7" width="5" height="5"/><rect x="1093.7" y="245.7" width="5" height="5"/><rect x="1087.5" y="251.9" width="5" height="5"/><rect x="1093.7" y="251.9" width="5" height="5"/></g>
<path stroke="#fff" stroke-width="1" d="M1090.0 86.2v3.2M1096.2 86.2v3.2M1090.0 92.4v3.2M1096.2 92.4v3.2M1009.8 135.6v3.2M1170.2 135.6v3.2M1176.4 135.6v3.2M1009.8 203.4v3.2M1170.2 203.4v3.2M1176.4 203.4v3.2M1090.0 246.6v3.2M1096.2 246.6v3.2M1090.0 252.8v3.2M1096.2 252.8v3.2"/>
<g fill="#e62a30"><circle cx="1021.8" cy="87.8" r="1.2"/><circle cx="1028.0" cy="87.8" r="1.2"/><circle cx="1040.3" cy="87.8" r="1.2"/><circle cx="1046.5" cy="87.8" r="1.2"/><circle cx="1052.7" cy="87.8" r="1.2"/><circle cx="1065.0" cy="87.8" r="1.2"/><circle cx="1071.2" cy="87.8" r="1.2"/><circle cx="1077.4" cy="87.8" r="1.2"/><circle cx="1108.2" cy="87.8" r="1.2"/><circle cx="1114.4" cy="87.8" r="1.2"/><circle cx="1120.6" cy="87.8" r="1.2"/><circle cx="1132.9" cy="87.8" r="1.2"/><circle cx="1139.1" cy="87.8" r="1.2"/><circle cx="1145.2" cy="87.8" r="1.2"/><circle cx="1157.6" cy="87.8" r="1.2"/><circle cx="1163.8" cy="87.8" r="1.2"/><circle cx="1021.8" cy="94.0" r="1.2"/><circle cx="1028.0" cy="94.0" r="1.2"/><circle cx="1040.3" cy="94.0" r="1.2"/><circle cx="1046.5" cy="94.0" r="1.2"/><circle cx="1052.7" cy="94.0" r="1.2"/><circle cx="1065.0" cy="94.0" r="1.2"/><circle cx="1071.2" cy="94.0" r="1.2"/><circle cx="1108.2" cy="94.0" r="1.2"/><circle cx="1114.4" cy="94.0" r="1.2"/><circle cx="1120.6" cy="94.0" r="1.2"/><circle cx="1132.9" cy="94.0" r="1.2"/><circle cx="1139.1" cy="94.0" r="1.2"/><circle cx="1145.2" cy="94.0" r="1.2"/><circle cx="1157.6" cy="94.0" r="1.2"/><circle cx="1163.8" cy="94.0" r="1.2"/><circle cx="1015.7" cy="100.1" r="1.2"/><circle cx="1028.0" cy="100.1" r="1.2"/><circle cx="1040.3" cy="100.1" r="1.2"/><circle cx="1046.5" cy="100.1" r="1.2"/><circle cx="1052.7" cy="100.1" r="1.2"/><circle cx="1058.9" cy="100.1" r="1.2"/><circle cx="1065.0" cy="100.1" r="1.2"/><circle cx="1071.2" cy="100.1" r="1.2"/><circle cx="1077.4" cy="100.1" r="1.2"/><circle cx="1083.5" cy="100.1" r="1.2"/><circle cx="1089.7" cy="100.1" r="1.2"/><circle cx="1095.9" cy="100.1" r="1.2"/><circle cx="1102.0" cy="100.1" r="1.2"/><circle cx="1108.2" cy="100.1" r="1.2"/><circle cx="1114.4" cy="100.1" r="1.2"/><circle cx="1120.6" cy="100.1" r="1.2"/><circle cx="1126.7" cy="100.1" r="1.2"/><circle cx="1132.9" cy="100.1" r="1.2"/><circle cx="1139.1" cy="100.1" r="1.2"/><circle cx="1151.4" cy="100.1" r="1.2"/><circle cx="1157.6" cy="100.1" r="1.2"/><circle cx="1163.8" cy="100.1" r="1.2"/><circle cx="1169.9" cy="100.1" r="1.2"/><circle cx="1009.5" cy="106.3" r="1.2"/><circle cx="1015.7" cy="106.3" r="1.2"/><circle cx="1028.0" cy="106.3" r="1.2"/><circle cx="1040.3" cy="106.3" r="1.2"/><circle cx="1046.5" cy="106.3" r="1.2"/><circle cx="1052.7" cy="106.3" r="1.2"/><circle cx="1058.9" cy="106.3" r="1.2"/><circle cx="1065.0" cy="106.3" r="1.2"/><circle cx="1071.2" cy="106.3" r="1.2"/><circle cx="1077.4" cy="106.3" r="1.2"/><circle cx="1083.5" cy="106.3" r="1.2"/><circle cx="1089.7" cy="106.3" r="1.2"/><circle cx="1095.9" cy="106.3" r="1.2"/><circle cx="1102.0" cy="106.3" r="1.2"/><circle cx="1108.2" cy="106.3" r="1.2"/><circle cx="1114.4" cy="106.3" r="1.2"/><circle cx="1120.6" cy="106.3" r="1.2"/><circle cx="1126.7" cy="106.3" r="1.2"/><circle cx="1132.9" cy="106.3" r="1.2"/><circle cx="1139.1" cy="106.3" r="1.2"/><circle cx="1151.4" cy="106.3" r="1.2"/><circle cx="1157.6" cy="106.3" r="1.2"/><circle cx="1163.8" cy="106.3" r="1.2"/><circle cx="1169.9" cy="106.3" r="1.2"/><circle cx="1176.1" cy="106.3" r="1.2"/><circle cx="1009.5" cy="112.5" r="1.2"/><circle cx="1015.7" cy="112.5" r="1.2"/><circle cx="1021.8" cy="112.5" r="1.2"/><circle cx="1028.0" cy="112.5" r="1.2"/><circle cx="1034.2" cy="112.5" r="1.2"/><circle cx="1046.5" cy="112.5" r="1.2"/><circle cx="1052.7" cy="112.5" r="1.2"/><circle cx="1071.2" cy="112.5" r="1.2"/><circle cx="1077.4" cy="112.5" r="1.2"/><circle cx="1089.7" cy="112.5" r="1.2"/><circle cx="1095.9" cy="112.5" r="1.2"/><circle cx="1114.4" cy="112.5" r="1.2"/><circle cx="1120.6" cy="112.5" r="1.2"/><circle cx="1132.9" cy="112.5" r="1.2"/><circle cx="1139.1" cy="112.5" r="1.2"/><circle cx="1151.4" cy="112.5" r="1.2"/><circle cx="1157.6" cy="112.5" r="1.2"/><circle cx="1163.8" cy="112.5" r="1.2"/><circle cx="1169.9" cy="112.5" r="1.2"/><circle cx="1176.1" cy="112.5" r="1.2"/><circle cx="1009.5" cy="118.7" r="1.2"/><circle cx="1015.7" cy="118.7" r="1.2"/><circle cx="1021.8" cy="118.7" r="1.2"/><circle cx="1028.0" cy="118.7" r="1.2"/><circle cx="1034.2" cy="118.7" r="1.2"/><circle cx="1046.5" cy="118.7" r="1.2"/><circle cx="1052.7" cy="118.7" r="1.2"/><circle cx="1065.0" cy="118.7" r="1.2"/><circle cx="1071.2" cy="118.7" r="1.2"/><circle cx="1077.4" cy="118.7" r="1.2"/><circle cx="1089.7" cy="118.7" r="1.2"/><circle cx="1095.9" cy="118.7" r="1.2"/><circle cx="1108.2" cy="118.7" r="1.2"/><circle cx="1114.4" cy="118.7" r="1.2"/><circle cx="1120.6" cy="118.7" r="1.2"/><circle cx="1132.9" cy="118.7" r="1.2"/><circle cx="1151.4" cy="118.7" r="1.2"/><circle cx="1157.6" cy="118.7" r="1.2"/><circle cx="1163.8" cy="118.7" r="1.2"/><circle cx="1169.9" cy="118.7" r="1.2"/><circle cx="1176.1" cy="118.7" r="1.2"/><circle cx="1009.5" cy="124.8" r="1.2"/><circle cx="1015.7" cy="124.8" r="1.2"/><circle cx="1021.8" cy="124.8" r="1.2"/><circle cx="1028.0" cy="124.8" r="1.2"/><circle cx="1034.2" cy="124.8" r="1.2"/><circle cx="1040.3" cy="124.8" r="1.2"/><circle cx="1046.5" cy="124.8" r="1.2"/><circle cx="1052.7" cy="124.8" r="1.2"/><circle cx="1065.0" cy="124.8" r="1.2"/><circle cx="1071.2" cy="124.8" r="1.2"/><circle cx="1083.5" cy="124.8" r="1.2"/><circle cx="1102.0" cy="124.8" r="1.2"/><circle cx="1120.6" cy="124.8" r="1.2"/><circle cx="1126.7" cy="124.8" r="1.2"/><circle cx="1132.9" cy="124.8" r="1.2"/><circle cx="1139.1" cy="124.8" r="1.2"/><circle cx="1145.2" cy="124.8" r="1.2"/><circle cx="1151.4" cy="124.8" r="1.2"/><circle cx="1157.6" cy="124.8" r="1.2"/><circle cx="1163.8" cy="124.8" r="1.2"/><circle cx="1169.9" cy="124.8" r="1.2"/><circle cx="1176.1" cy="124.8" r="1.2"/><circle cx="1021.8" cy="131.0" r="1.2"/><circle cx="1028.0" cy="131.0" r="1.2"/><circle cx="1052.7" cy="131.0" r="1.2"/><circle cx="1065.0" cy="131.0" r="1.2"/><circle cx="1077.4" cy="131.0" r="1.2"/><circle cx="1083.5" cy="131.0" r="1.2"/><circle cx="1089.7" cy="131.0" r="1.2"/><circle cx="1095.9" cy="131.0" r="1.2"/><circle cx="1102.0" cy="131.0" r="1.2"/><circle cx="1108.2" cy="131.0" r="1.2"/><circle cx="1120.6" cy="131.0" r="1.2"/><circle cx="1132.9" cy="131.0" r="1.2"/><circle cx="1145.2" cy="131.0" r="1.2"/><circle cx="1151.4" cy="131.0" r="1.2"/><circle cx="1157.6" cy="131.0" r="1.2"/><circle cx="1163.8" cy="131.0" r="1.2"/><circle cx="1021.8" cy="137.2" r="1.2"/><circle cx="1028.0" cy="137.2" r="1.2"/><circle cx="1034.2" cy="137.2" r="1.2"/><circle cx="1040.3" cy="137.2" r="1.2"/><circle cx="1046.5" cy="137.2" r="1.2"/><circle cx="1065.0" cy="137.2" r="1.2"/><circle cx="1077.4" cy="137.2" r="1.2"/><circle cx="1083.5" cy="137.2" r="1.2"/><circle cx="1089.7" cy="137.2" r="1.2"/><circle cx="1095.9" cy="137.2" r="1.2"/><circle cx="1102.0" cy="137.2" r="1.2"/><circle cx="1120.6" cy="137.2" r="1.2"/><circle cx="1145.2" cy="137.2" r="1.2"/><circle cx="1151.4" cy="137.2" r="1.2"/><circle cx="1157.6" cy="137.2" r="1.2"/><circle cx="1163.8" cy="137.2" r="1.2"/><circle cx="1009.5" cy="143.3" r="1.2"/><circle cx="1015.7" cy="143.3" r="1.2"/><circle cx="1021.8" cy="143.3" r="1.2"/><circle cx="1028.0" cy="143.3" r="1.2"/><circle cx="1046.5" cy="143.3" r="1.2"/><circle cx="1052.7" cy="143.3" r="1.2"/><circle cx="1132.9" cy="143.3" r="1.2"/><circle cx="1139.1" cy="143.3" r="1.2"/><circle cx="1157.6" cy="143.3" r="1.2"/><circle cx="1163.8" cy="143.3" r="1.2"/><circle cx="1169.9" cy="143.3" r="1.2"/><circle cx="1176.1" cy="143.3" r="1.2"/><circle cx="1009.5" cy="149.5" r="1.2"/><circle cx="1015.7" cy="149.5" r="1.2"/><circle cx="1021.8" cy="149.5" r="1.2"/><circle cx="1028.0" cy="149.5" r="1.2"/><circle cx="1040.3" cy="149.5" r="1.2"/><circle cx="1046.5" cy="149.5" r="1.2"/><circle cx="1052.7" cy="149.5" r="1.2"/><circle cx="1132.9" cy="149.5" r="1.2"/><circle cx="1139.1" cy="149.5" r="1.2"/><circle cx="1145.2" cy="149.5" r="1.2"/><circle cx="1151.4" cy="149.5" r="1.2"/><circle cx="1169.9" cy="149.5" r="1.2"/><circle cx="1176.1" cy="149.5" r="1.2"/><circle cx="1009.5" cy="155.7" r="1.2"/><circle cx="1015.7" cy="155.7" r="1.2"/><circle cx="1021.8" cy="155.7" r="1.2"/><circle cx="1028.0" cy="155.7" r="1.2"/><circle cx="1046.5" cy="155.7" r="1.2"/><circle cx="1052.7" cy="155.7" r="1.2"/><circle cx="1157.6" cy="155.7" r="1.2"/><circle cx="1163.8" cy="155.7" r="1.2"/><circle cx="1169.9" cy="155.7" r="1.2"/><circle cx="1176.1" cy="155.7" r="1.2"/><circle cx="1021.8" cy="161.8" r="1.2"/><circle cx="1028.0" cy="161.8" r="1.2"/><circle cx="1046.5" cy="161.8" r="1.2"/><circle cx="1157.6" cy="161.8" r="1.2"/><circle cx="1163.8" cy="161.8" r="1.2"/><circle cx="1009.5" cy="168.0" r="1.2"/><circle cx="1015.7" cy="168.0" r="1.2"/><circle cx="1021.8" cy="168.0" r="1.2"/><circle cx="1132.9" cy="168.0" r="1.2"/><circle cx="1157.6" cy="168.0" r="1.2"/><circle cx="1163.8" cy="168.0" r="1.2"/><circle cx="1169.9" cy="168.0" r="1.2"/><circle cx="1176.1" cy="168.0" r="1.2"/><circle cx="1009.5" cy="174.2" r="1.2"/><circle cx="1015.7" cy="174.2" r="1.2"/><circle cx="1021.8" cy="174.2" r="1.2"/><circle cx="1028.0" cy="174.2" r="1.2"/><circle cx="1034.2" cy="174.2" r="1.2"/><circle cx="1040.3" cy="174.2" r="1.2"/><circle cx="1046.5" cy="174.2" r="1.2"/><circle cx="1132.9" cy="174.2" r="1.2"/><circle cx="1139.1" cy="174.2" r="1.2"/><circle cx="1145.2" cy="174.2" r="1.2"/><circle cx="1157.6" cy="174.2" r="1.2"/><circle cx="1163.8" cy="174.2" r="1.2"/><circle cx="1169.9" cy="174.2" r="1.2"/><circle cx="1176.1" cy="174.2" r="1.2"/><circle cx="1021.8" cy="180.3" r="1.2"/><circle cx="1028.0" cy="180.3" r="1.2"/><circle cx="1132.9" cy="180.3" r="1.2"/><circle cx="1139.1" cy="180.3" r="1.2"/><circle cx="1157.6" cy="180.3" r="1.2"/><circle cx="1163.8" cy="180.3" r="1.2"/><circle cx="1009.5" cy="186.5" r="1.2"/><circle cx="1015.7" cy="186.5" r="1.2"/><circle cx="1021.8" cy="186.5" r="1.2"/><circle cx="1028.0" cy="186.5" r="1.2"/><circle cx="1034.2" cy="186.5" r="1.2"/><circle cx="1040.3" cy="186.5" r="1.2"/><circle cx="1046.5" cy="186.5" r="1.2"/><circle cx="1052.7" cy="186.5" r="1.2"/><circle cx="1139.1" cy="186.5" r="1.2"/><circle cx="1157.6" cy="186.5" r="1.2"/><circle cx="1163.8" cy="186.5" r="1.2"/><circle cx="1169.9" cy="186.5" r="1.2"/><circle cx="1176.1" cy="186.5" r="1.2"/><circle cx="1009.5" cy="192.7" r="1.2"/><circle cx="1015.7" cy="192.7" r="1.2"/><circle cx="1021.8" cy="192.7" r="1.2"/><circle cx="1028.0" cy="192.7" r="1.2"/><circle cx="1034.2" cy="192.7" r="1.2"/><circle cx="1040.3" cy="192.7" r="1.2"/><circle cx="1046.5" cy="192.7" r="1.2"/><circle cx="1052.7" cy="192.7" r="1.2"/><circle cx="1139.1" cy="192.7" r="1.2"/><circle cx="1145.2" cy="192.7" r="1.2"/><circle cx="1151.4" cy="192.7" r="1.2"/><circle cx="1157.6" cy="192.7" r="1.2"/><circle cx="1163.8" cy="192.7" r="1.2"/><circle cx="1169.9" cy="192.7" r="1.2"/><circle cx="1176.1" cy="192.7" r="1.2"/><circle cx="1009.5" cy="198.9" r="1.2"/><circle cx="1015.7" cy="198.9" r="1.2"/><circle cx="1021.8" cy="198.9" r="1.2"/><circle cx="1028.0" cy="198.9" r="1.2"/><circle cx="1052.7" cy="198.9" r="1.2"/><circle cx="1021.8" cy="205.0" r="1.2"/><circle cx="1028.0" cy="205.0" r="1.2"/><circle cx="1034.2" cy="205.0" r="1.2"/><circle cx="1040.3" cy="205.0" r="1.2"/><circle cx="1046.5" cy="205.0" r="1.2"/><circle cx="1077.4" cy="205.0" r="1.2"/><circle cx="1083.5" cy="205.0" r="1.2"/><circle cx="1089.7" cy="205.0" r="1.2"/><circle cx="1095.9" cy="205.0" r="1.2"/><circle cx="1102.0" cy="205.0" r="1.2"/><circle cx="1108.2" cy="205.0" r="1.2"/><circle cx="1145.2" cy="205.0" r="1.2"/><circle cx="1151.4" cy="205.0" r="1.2"/><circle cx="1021.8" cy="211.2" r="1.2"/><circle cx="1028.0" cy="211.2" r="1.2"/><circle cx="1034.2" cy="211.2" r="1.2"/><circle cx="1040.3" cy="211.2" r="1.2"/><circle cx="1052.7" cy="211.2" r="1.2"/><circle cx="1065.0" cy="211.2" r="1.2"/><circle cx="1077.4" cy="211.2" r="1.2"/><circle cx="1083.5" cy="211.2" r="1.2"/><circle cx="1089.7" cy="211.2" r="1.2"/><circle cx="1102.0" cy="211.2" r="1.2"/><circle cx="1108.2" cy="211.2" r="1.2"/><circle cx="1139.1" cy="211.2" r="1.2"/><circle cx="1009.5" cy="217.4" r="1.2"/><circle cx="1015.7" cy="217.4" r="1.2"/><circle cx="1021.8" cy="217.4" r="1.2"/><circle cx="1034.2" cy="217.4" r="1.2"/><circle cx="1040.3" cy="217.4" r="1.2"/><circle cx="1046.5" cy="217.4" r="1.2"/><circle cx="1052.7" cy="217.4" r="1.2"/><circle cx="1058.9" cy="217.4" r="1.2"/><circle cx="1065.0" cy="217.4" r="1.2"/><circle cx="1077.4" cy="217.4" r="1.2"/><circle cx="1089.7" cy="217.4" r="1.2"/><circle cx="1102.0" cy="217.4" r="1.2"/><circle cx="1108.2" cy="217.4" r="1.2"/><circle cx="1132.9" cy="217.4" r="1.2"/><circle cx="1139.1" cy="217.4" r="1.2"/><circle cx="1145.2" cy="217.4" r="1.2"/><circle cx="1151.4" cy="217.4" r="1.2"/><circle cx="1157.6" cy="217.4" r="1.2"/><circle cx="1163.8" cy="217.4" r="1.2"/><circle cx="1169.9" cy="217.4" r="1.2"/><circle cx="1009.5" cy="223.5" r="1.2"/><circle cx="1015.7" cy="223.5" r="1.2"/><circle cx="1021.8" cy="223.5" r="1.2"/><circle cx="1028.0" cy="223.5" r="1.2"/><circle cx="1034.2" cy="223.5" r="1.2"/><circle cx="1046.5" cy="223.5" r="1.2"/><circle cx="1052.7" cy="223.5" r="1.2"/><circle cx="1065.0" cy="223.5" r="1.2"/><circle cx="1071.2" cy="223.5" r="1.2"/><circle cx="1077.4" cy="223.5" r="1.2"/><circle cx="1089.7" cy="223.5" r="1.2"/><circle cx="1095.9" cy="223.5" r="1.2"/><circle cx="1108.2" cy="223.5" r="1.2"/><circle cx="1120.6" cy="223.5" r="1.2"/><circle cx="1132.9" cy="223.5" r="1.2"/><circle cx="1139.1" cy="223.5" r="1.2"/><circle cx="1151.4" cy="223.5" r="1.2"/><circle cx="1157.6" cy="223.5" r="1.2"/><circle cx="1163.8" cy="223.5" r="1.2"/><circle cx="1009.5" cy="229.7" r="1.2"/><circle cx="1015.7" cy="229.7" r="1.2"/><circle cx="1021.8" cy="229.7" r="1.2"/><circle cx="1028.0" cy="229.7" r="1.2"/><circle cx="1034.2" cy="229.7" r="1.2"/><circle cx="1046.5" cy="229.7" r="1.2"/><circle cx="1052.7" cy="229.7" r="1.2"/><circle cx="1065.0" cy="229.7" r="1.2"/><circle cx="1071.2" cy="229.7" r="1.2"/><circle cx="1089.7" cy="229.7" r="1.2"/><circle cx="1095.9" cy="229.7" r="1.2"/><circle cx="1108.2" cy="229.7" r="1.2"/><circle cx="1120.6" cy="229.7" r="1.2"/><circle cx="1132.9" cy="229.7" r="1.2"/><circle cx="1139.1" cy="229.7" r="1.2"/><circle cx="1157.6" cy="229.7" r="1.2"/><circle cx="1163.8" cy="229.7" r="1.2"/><circle cx="1169.9" cy="229.7" r="1.2"/><circle cx="1176.1" cy="229.7" r="1.2"/><circle cx="1009.5" cy="235.9" r="1.2"/><circle cx="1015.7" cy="235.9" r="1.2"/><circle cx="1021.8" cy="235.9" r="1.2"/><circle cx="1028.0" cy="235.9" r="1.2"/><circle cx="1034.2" cy="235.9" r="1.2"/><circle cx="1040.3" cy="235.9" r="1.2"/><circle cx="1046.5" cy="235.9" r="1.2"/><circle cx="1052.7" cy="235.9" r="1.2"/><circle cx="1058.9" cy="235.9" r="1.2"/><circle cx="1065.0" cy="235.9" r="1.2"/><circle cx="1071.2" cy="235.9" r="1.2"/><circle cx="1077.4" cy="235.9" r="1.2"/><circle cx="1083.5" cy="235.9" r="1.2"/><circle cx="1089.7" cy="235.9" r="1.2"/><circle cx="1095.9" cy="235.9" r="1.2"/><circle cx="1102.0" cy="235.9" r="1.2"/><circle cx="1108.2" cy="235.9" r="1.2"/><circle cx="1126.7" cy="235.9" r="1.2"/><circle cx="1132.9" cy="235.9" r="1.2"/><circle cx="1139.1" cy="235.9" r="1.2"/><circle cx="1145.2" cy="235.9" r="1.2"/><circle cx="1151.4" cy="235.9" r="1.2"/><circle cx="1157.6" cy="235.9" r="1.2"/><circle cx="1163.8" cy="235.9" r="1.2"/><circle cx="1169.9" cy="235.9" r="1.2"/><circle cx="1176.1" cy="235.9" r="1.2"/><circle cx="1015.7" cy="242.1" r="1.2"/><circle cx="1021.8" cy="242.1" r="1.2"/><circle cx="1028.0" cy="242.1" r="1.2"/><circle cx="1034.2" cy="242.1" r="1.2"/><circle cx="1040.3" cy="242.1" r="1.2"/><circle cx="1046.5" cy="242.1" r="1.2"/><circle cx="1052.7" cy="242.1" r="1.2"/><circle cx="1058.9" cy="242.1" r="1.2"/><circle cx="1065.0" cy="242.1" r="1.2"/><circle cx="1071.2" cy="242.1" r="1.2"/><circle cx="1077.4" cy="242.1" r="1.2"/><circle cx="1083.5" cy="242.1" r="1.2"/><circle cx="1089.7" cy="242.1" r="1.2"/><circle cx="1095.9" cy="242.1" r="1.2"/><circle cx="1102.0" cy="242.1" r="1.2"/><circle cx="1108.2" cy="242.1" r="1.2"/><circle cx="1126.7" cy="242.1" r="1.2"/><circle cx="1132.9" cy="242.1" r="1.2"/><circle cx="1139.1" cy="242.1" r="1.2"/><circle cx="1151.4" cy="242.1" r="1.2"/><circle cx="1157.6" cy="242.1" r="1.2"/><circle cx="1163.8" cy="242.1" r="1.2"/><circle cx="1169.9" cy="242.1" r="1.2"/><circle cx="1021.8" cy="248.2" r="1.2"/><circle cx="1028.0" cy="248.2" r="1.2"/><circle cx="1040.3" cy="248.2" r="1.2"/><circle cx="1046.5" cy="248.2" r="1.2"/><circle cx="1052.7" cy="248.2" r="1.2"/><circle cx="1065.0" cy="248.2" r="1.2"/><circle cx="1071.2" cy="248.2" r="1.2"/><circle cx="1077.4" cy="248.2" r="1.2"/><circle cx="1108.2" cy="248.2" r="1.2"/><circle cx="1114.4" cy="248.2" r="1.2"/><circle cx="1139.1" cy="248.2" r="1.2"/><circle cx="1145.2" cy="248.2" r="1.2"/><circle cx="1157.6" cy="248.2" r="1.2"/><circle cx="1163.8" cy="248.2" r="1.2"/><circle cx="1021.8" cy="254.4" r="1.2"/><circle cx="1028.0" cy="254.4" r="1.2"/><circle cx="1040.3" cy="254.4" r="1.2"/><circle cx="1046.5" cy="254.4" r="1.2"/><circle cx="1052.7" cy="254.4" r="1.2"/><circle cx="1065.0" cy="254.4" r="1.2"/><circle cx="1071.2" cy="254.4" r="1.2"/><circle cx="1077.4" cy="254.4" r="1.2"/><circle cx="1108.2" cy="254.4" r="1.2"/><circle cx="1139.1" cy="254.4" r="1.2"/><circle cx="1145.2" cy="254.4" r="1.2"/><circle cx="1157.6" cy="254.4" r="1.2"/><circle cx="1163.8" cy="254.4" r="1.2"/></g>
<g fill="#1428e0"><circle cx="1016.0" cy="88.1" r="1.1"/><circle cx="1034.5" cy="88.1" r="1.1"/><circle cx="1059.2" cy="88.1" r="1.1"/><circle cx="1083.8" cy="88.1" r="1.1"/><circle cx="1102.3" cy="88.1" r="1.1"/><circle cx="1127.0" cy="88.1" r="1.1"/><circle cx="1151.7" cy="88.1" r="1.1"/><circle cx="1170.2" cy="88.1" r="1.1"/><circle cx="1009.8" cy="94.3" r="1.1"/><circle cx="1176.4" cy="94.3" r="1.1"/><circle cx="1040.6" cy="112.8" r="1.1"/><circle cx="1059.2" cy="112.8" r="1.1"/><circle cx="1083.8" cy="112.8" r="1.1"/><circle cx="1102.3" cy="112.8" r="1.1"/><circle cx="1127.0" cy="112.8" r="1.1"/><circle cx="1145.5" cy="112.8" r="1.1"/><circle cx="1009.8" cy="131.3" r="1.1"/><circle cx="1071.5" cy="131.3" r="1.1"/><circle cx="1114.7" cy="131.3" r="1.1"/><circle cx="1176.4" cy="131.3" r="1.1"/><circle cx="1034.5" cy="143.6" r="1.1"/><circle cx="1151.7" cy="143.6" r="1.1"/><circle cx="1009.8" cy="162.1" r="1.1"/><circle cx="1034.5" cy="162.1" r="1.1"/><circle cx="1151.7" cy="162.1" r="1.1"/><circle cx="1176.4" cy="162.1" r="1.1"/><circle cx="1009.8" cy="180.7" r="1.1"/><circle cx="1034.5" cy="180.7" r="1.1"/><circle cx="1151.7" cy="180.7" r="1.1"/><circle cx="1176.4" cy="180.7" r="1.1"/><circle cx="1034.5" cy="199.2" r="1.1"/><circle cx="1151.7" cy="199.2" r="1.1"/><circle cx="1053.0" cy="205.3" r="1.1"/><circle cx="1133.2" cy="205.3" r="1.1"/><circle cx="1009.8" cy="211.5" r="1.1"/><circle cx="1071.5" cy="211.5" r="1.1"/><circle cx="1114.7" cy="211.5" r="1.1"/><circle cx="1176.4" cy="211.5" r="1.1"/><circle cx="1040.6" cy="230.0" r="1.1"/><circle cx="1059.2" cy="230.0" r="1.1"/><circle cx="1083.8" cy="230.0" r="1.1"/><circle cx="1102.3" cy="230.0" r="1.1"/><circle cx="1127.0" cy="230.0" r="1.1"/><circle cx="1145.5" cy="230.0" r="1.1"/><circle cx="1009.8" cy="248.5" r="1.1"/><circle cx="1176.4" cy="248.5" r="1.1"/><circle cx="1016.0" cy="254.7" r="1.1"/><circle cx="1034.5" cy="254.7" r="1.1"/><circle cx="1059.2" cy="254.7" r="1.1"/><circle cx="1083.8" cy="254.7" r="1.1"/><circle cx="1102.3" cy="254.7" r="1.1"/><circle cx="1127.0" cy="254.7" r="1.1"/><circle cx="1151.7" cy="254.7" r="1.1"/><circle cx="1170.2" cy="254.7" r="1.1"/></g>
<g fill="#e8c020"><circle cx="1040.6" cy="155.7" r="1.0"/><circle cx="1139.4" cy="155.7" r="1.0"/><circle cx="1139.4" cy="161.8" r="1.0"/><circle cx="1028.3" cy="168.0" r="1.0"/><circle cx="1034.5" cy="168.0" r="1.0"/><circle cx="1040.6" cy="168.0" r="1.0"/><circle cx="1053.0" cy="168.0" r="1.0"/><circle cx="1139.4" cy="168.0" r="1.0"/><circle cx="1145.5" cy="168.0" r="1.0"/><circle cx="1151.7" cy="168.0" r="1.0"/><circle cx="1053.0" cy="174.2" r="1.0"/></g>
<g fill="#8c1008" stroke="#3a0400" stroke-width="0.8"><circle cx="1139.4" cy="131.0" r="2.25"/><circle cx="1157.9" cy="149.5" r="2.25"/><circle cx="1151.7" cy="155.7" r="2.25"/><circle cx="1133.2" cy="186.5" r="2.25"/><circle cx="1139.4" cy="198.9" r="2.25"/><circle cx="1120.9" cy="205.0" r="2.25"/><circle cx="1139.4" cy="205.0" r="2.25"/><circle cx="1120.9" cy="211.2" r="2.25"/><circle cx="1133.2" cy="211.2" r="2.25"/><circle cx="1114.7" cy="217.4" r="2.25"/><circle cx="1120.9" cy="217.4" r="2.25"/><circle cx="1151.7" cy="229.7" r="2.25"/><circle cx="1114.7" cy="242.1" r="2.25"/><circle cx="1120.9" cy="242.1" r="2.25"/><circle cx="1145.5" cy="242.1" r="2.25"/><circle cx="1120.9" cy="248.2" r="2.25"/><rect x="1013.6" y="202.6" width="4.8" height="4.8"/></g>
<g fill="#fff4ec" stroke="#7a0c04" stroke-width="1.45"><circle cx="1108.5" cy="112.5" r="2.0"/><circle cx="1114.7" cy="124.8" r="2.0"/><circle cx="1164.0" cy="149.5" r="2.0"/><circle cx="1133.2" cy="192.7" r="2.0"/><circle cx="1133.2" cy="198.9" r="2.0"/><circle cx="1157.9" cy="198.9" r="2.0"/><circle cx="1164.0" cy="198.9" r="2.0"/><circle cx="1170.2" cy="198.9" r="2.0"/><circle cx="1176.4" cy="198.9" r="2.0"/><circle cx="1157.9" cy="205.0" r="2.0"/><circle cx="1164.0" cy="205.0" r="2.0"/><circle cx="1157.9" cy="211.2" r="2.0"/><circle cx="1164.0" cy="211.2" r="2.0"/><circle cx="1176.4" cy="217.4" r="2.0"/><circle cx="1170.2" cy="223.5" r="2.0"/><circle cx="1176.4" cy="223.5" r="2.0"/><circle cx="1114.7" cy="229.7" r="2.0"/><circle cx="1114.7" cy="235.9" r="2.0"/><circle cx="1120.9" cy="235.9" r="2.0"/><circle cx="1133.2" cy="248.2" r="2.0"/><circle cx="1114.7" cy="254.4" r="2.0"/><circle cx="1120.9" cy="254.4" r="2.0"/><circle cx="1133.2" cy="254.4" r="2.0"/></g>
<g fill="#403028" opacity="0.8"><rect x="1009.1" y="81.4" width="1.4" height="1.4"/><rect x="1009.1" y="259.9" width="1.4" height="1.5"/><rect x="1002.5" y="87.0" width="1.7" height="1.5"/><rect x="1181.7" y="87.0" width="1.7" height="1.5"/><rect x="1015.3" y="81.4" width="1.4" height="1.4"/><rect x="1015.3" y="259.9" width="1.4" height="1.5"/><rect x="1002.5" y="93.2" width="1.7" height="1.5"/><rect x="1181.7" y="93.2" width="1.7" height="1.5"/><rect x="1021.4" y="81.4" width="1.4" height="1.4"/><rect x="1021.4" y="259.9" width="1.4" height="1.5"/><rect x="1002.5" y="99.3" width="1.7" height="1.5"/><rect x="1181.7" y="99.3" width="1.7" height="1.5"/><rect x="1027.6" y="81.4" width="1.4" height="1.4"/><rect x="1027.6" y="259.9" width="1.4" height="1.5"/><rect x="1002.5" y="105.5" width="1.7" height="1.5"/><rect x="1181.7" y="105.5" width="1.7" height="1.5"/><rect x="1033.8" y="81.4" width="1.4" height="1.4"/><rect x="1033.8" y="259.9" width="1.4" height="1.5"/><rect x="1002.5" y="111.7" width="1.7" height="1.5"/><rect x="1181.7" y="111.7" width="1.7" height="1.5"/><rect x="1039.9" y="81.4" width="1.4" height="1.4"/><rect x="1039.9" y="259.9" width="1.4" height="1.5"/><rect x="1002.5" y="117.9" width="1.7" height="1.5"/><rect x="1181.7" y="117.9" width="1.7" height="1.5"/><rect x="1046.1" y="81.4" width="1.4" height="1.4"/><rect x="1046.1" y="259.9" width="1.4" height="1.5"/><rect x="1002.5" y="124.0" width="1.7" height="1.5"/><rect x="1181.7" y="124.0" width="1.7" height="1.5"/><rect x="1052.3" y="81.4" width="1.4" height="1.4"/><rect x="1052.3" y="259.9" width="1.4" height="1.5"/><rect x="1002.5" y="130.2" width="1.7" height="1.5"/><rect x="1181.7" y="130.2" width="1.7" height="1.5"/><rect x="1058.5" y="81.4" width="1.4" height="1.4"/><rect x="1058.5" y="259.9" width="1.4" height="1.5"/><rect x="1002.5" y="136.4" width="1.7" height="1.5"/><rect x="1181.7" y="136.4" width="1.7" height="1.5"/><rect x="1064.2" y="81.4" width="2.2" height="1.4"/><rect x="1064.2" y="259.9" width="2.2" height="1.5"/><rect x="1002.5" y="142.5" width="1.7" height="1.5"/><rect x="1181.7" y="142.5" width="1.7" height="1.5"/><rect x="1070.4" y="81.4" width="2.2" height="1.4"/><rect x="1070.4" y="259.9" width="2.2" height="1.5"/><rect x="1002.5" y="148.7" width="1.7" height="1.5"/><rect x="1181.7" y="148.7" width="1.7" height="1.5"/><rect x="1076.6" y="81.4" width="2.2" height="1.4"/><rect x="1076.6" y="259.9" width="2.2" height="1.5"/><rect x="1002.5" y="154.9" width="1.7" height="1.5"/><rect x="1181.7" y="154.9" width="1.7" height="1.5"/><rect x="1082.7" y="81.4" width="2.2" height="1.4"/><rect x="1082.7" y="259.9" width="2.2" height="1.5"/><rect x="1002.5" y="161.0" width="1.7" height="1.5"/><rect x="1181.7" y="161.0" width="1.7" height="1.5"/><rect x="1088.9" y="81.4" width="2.2" height="1.4"/><rect x="1088.9" y="259.9" width="2.2" height="1.5"/><rect x="1002.5" y="167.2" width="1.7" height="1.5"/><rect x="1181.7" y="167.2" width="1.7" height="1.5"/><rect x="1095.1" y="81.4" width="2.2" height="1.4"/><rect x="1095.1" y="259.9" width="2.2" height="1.5"/><rect x="1002.5" y="173.4" width="1.7" height="1.5"/><rect x="1181.7" y="173.4" width="1.7" height="1.5"/><rect x="1101.2" y="81.4" width="2.2" height="1.4"/><rect x="1101.2" y="259.9" width="2.2" height="1.5"/><rect x="1002.5" y="179.5" width="1.7" height="1.5"/><rect x="1181.7" y="179.5" width="1.7" height="1.5"/><rect x="1107.4" y="81.4" width="2.2" height="1.4"/><rect x="1107.4" y="259.9" width="2.2" height="1.5"/><rect x="1002.5" y="185.7" width="1.7" height="1.5"/><rect x="1181.7" y="185.7" width="1.7" height="1.5"/><rect x="1113.6" y="81.4" width="2.2" height="1.4"/><rect x="1113.6" y="259.9" width="2.2" height="1.5"/><rect x="1002.5" y="191.9" width="1.7" height="1.5"/><rect x="1181.7" y="191.9" width="1.7" height="1.5"/><rect x="1119.8" y="81.4" width="2.2" height="1.4"/><rect x="1119.8" y="259.9" width="2.2" height="1.5"/><rect x="1002.5" y="198.1" width="1.7" height="1.5"/><rect x="1181.7" y="198.1" width="1.7" height="1.5"/><rect x="1125.9" y="81.4" width="2.2" height="1.4"/><rect x="1125.9" y="259.9" width="2.2" height="1.5"/><rect x="1002.5" y="204.2" width="1.7" height="1.5"/><rect x="1181.7" y="204.2" width="1.7" height="1.5"/><rect x="1132.1" y="81.4" width="2.2" height="1.4"/><rect x="1132.1" y="259.9" width="2.2" height="1.5"/><rect x="1002.5" y="210.4" width="1.7" height="1.5"/><rect x="1181.7" y="210.4" width="1.7" height="1.5"/><rect x="1138.3" y="81.4" width="2.2" height="1.4"/><rect x="1138.3" y="259.9" width="2.2" height="1.5"/><rect x="1002.5" y="216.6" width="1.7" height="1.5"/><rect x="1181.7" y="216.6" width="1.7" height="1.5"/><rect x="1144.4" y="81.4" width="2.2" height="1.4"/><rect x="1144.4" y="259.9" width="2.2" height="1.5"/><rect x="1002.5" y="222.7" width="1.7" height="1.5"/><rect x="1181.7" y="222.7" width="1.7" height="1.5"/><rect x="1150.6" y="81.4" width="2.2" height="1.4"/><rect x="1150.6" y="259.9" width="2.2" height="1.5"/><rect x="1002.5" y="228.9" width="1.7" height="1.5"/><rect x="1181.7" y="228.9" width="1.7" height="1.5"/><rect x="1156.8" y="81.4" width="2.2" height="1.4"/><rect x="1156.8" y="259.9" width="2.2" height="1.5"/><rect x="1002.5" y="235.1" width="1.7" height="1.5"/><rect x="1181.7" y="235.1" width="1.7" height="1.5"/><rect x="1163.0" y="81.4" width="2.2" height="1.4"/><rect x="1163.0" y="259.9" width="2.2" height="1.5"/><rect x="1002.5" y="241.2" width="1.7" height="1.5"/><rect x="1181.7" y="241.2" width="1.7" height="1.5"/><rect x="1169.1" y="81.4" width="2.2" height="1.4"/><rect x="1169.1" y="259.9" width="2.2" height="1.5"/><rect x="1002.5" y="247.4" width="1.7" height="1.5"/><rect x="1181.7" y="247.4" width="1.7" height="1.5"/><rect x="1175.3" y="81.4" width="2.2" height="1.4"/><rect x="1175.3" y="259.9" width="2.2" height="1.5"/><rect x="1002.5" y="253.6" width="1.7" height="1.5"/><rect x="1181.7" y="253.6" width="1.7" height="1.5"/></g>
<circle cx="1003.8" cy="81.7" r="1.8" fill="#ff0818"/>
<rect x="1053" y="72" width="19" height="6.5" fill="#fbfbc8" stroke="#d4d4c4" stroke-width="0.5"/>
<rect x="1059.8" y="74.0" width="5.7" height="0.8" fill="#333"/>
<rect x="1054.9" y="76.0" width="15.2" height="0.8" fill="#444"/>
<rect x="1114" y="72" width="19" height="6.5" fill="#e2f6c8" stroke="#d4d4c4" stroke-width="0.5"/>
<rect x="1120.8" y="74.0" width="5.7" height="0.8" fill="#333"/>
<rect x="1115.9" y="76.0" width="15.2" height="0.8" fill="#444"/>
<rect x="1053" y="263" width="19" height="6.5" fill="#fbdcdc" stroke="#d4d4c4" stroke-width="0.5"/>
<rect x="1059.8" y="264.9" width="5.7" height="0.8" fill="#333"/>
<rect x="1054.9" y="267.0" width="15.2" height="0.8" fill="#444"/>
<rect x="1114" y="263" width="19" height="6.5" fill="#f8c4f8" stroke="#d4d4c4" stroke-width="0.5"/>
<rect x="1120.8" y="264.9" width="5.7" height="0.8" fill="#333"/>
<rect x="1115.9" y="267.0" width="15.2" height="0.8" fill="#444"/>
<rect x="982" y="140" width="18" height="6.5" fill="#dcf6f6" stroke="#d4d4c4" stroke-width="0.5"/>
<rect x="988.5" y="141.9" width="5.4" height="0.8" fill="#333"/>
<rect x="983.8" y="144.0" width="14.4" height="0.8" fill="#444"/>
<rect x="982" y="202" width="18" height="6.5" fill="#e4ebe0" stroke="#d4d4c4" stroke-width="0.5"/>
<rect x="988.5" y="203.9" width="5.4" height="0.8" fill="#333"/>
<rect x="983.8" y="206.0" width="14.4" height="0.8" fill="#444"/>
<rect x="1186" y="140" width="18" height="6.5" fill="#f5dfcf" stroke="#d4d4c4" stroke-width="0.5"/>
<rect x="1192.5" y="141.9" width="5.4" height="0.8" fill="#333"/>
<rect x="1187.8" y="144.0" width="14.4" height="0.8" fill="#444"/>
<rect x="1186" y="202" width="18" height="6.5" fill="#ececc8" stroke="#d4d4c4" stroke-width="0.5"/>
<rect x="1192.5" y="203.9" width="5.4" height="0.8" fill="#333"/>
<rect x="1187.8" y="206.0" width="14.4" height="0.8" fill="#444"/>
<text x="1092.7" y="55.8" text-anchor="middle" font-family="Liberation Sans, sans-serif" font-size="6.1" fill="#000" stroke="#000" stroke-width="0.12">Top View - Wire Bond</text>
<text x="1092.7" y="65.8" text-anchor="middle" font-family="Liberation Sans, sans-serif" font-size="6.1" fill="#000" stroke="#000" stroke-width="0.12">Cyclone IV E - EP4CE115F29C8</text>
</svg>
<svg class="ico" style="left:0;top:286px" width="13" height="50" viewBox="0 0 13 50"><path d="M2 1.500l7.500 7M9.500 1.500l-7.500 7" stroke="#000" stroke-width="1.700" fill="none"/><path d="M3.500 14.500h6v4h-6zM3.500 15.500h6" fill="none" stroke="#000" stroke-width="1.100"/><path d="M1.500 17.500h6v5h-6z" fill="#f0f0f0" stroke="#000" stroke-width="1.100"/><path d="M4.500 28v5.500M4 27.500h4M2 33.500h7.500M5.500 34v3.500" fill="none" stroke="#000" stroke-width="1"/><rect x="6" y="27" width="2" height="6.500" fill="#000"/></svg>
<div class="abs" style="left:13px;top:282px;width:1px;height:730px;background:#a0a0a0"></div>
<div class="abs" style="left:0;top:282px;width:14px;height:1px;background:#a0a0a0"></div>
<div class="abs" style="left:0;top:1011px;width:14px;height:1px;background:#a0a0a0"></div>
<div class="abs" style="left:1px;top:1008.500px;font-size:11px;letter-spacing:-0.45px;white-space:nowrap;transform-origin:0 0;transform:rotate(-90deg)">All Pins</div>
<div class="abs" style="left:19px;top:285px;font-size:11px;letter-spacing:-0.35px">Named:</div>
<div class="abs" style="left:57px;top:280px;width:79px;height:20px;background:#fff;border-radius:2px;border-right:1px solid #e4e4e4"><span style="position:absolute;left:5px;top:5px;font-size:11px">*</span><svg class="ico" style="left:66px;top:9px" width="9" height="5" viewBox="0 0 9 5"><path d="M0 0h8l-4 4.500z" fill="#000"/></svg></div>
<div class="abs" style="left:137px;top:280px;width:21px;height:20px;border:1px solid #6e6e6e;border-radius:3px;background:linear-gradient(#f2f2f2,#dcdcdc 50%,#cfcfcf)"><svg class="ico" style="left:0;top:0" width="19" height="18" viewBox="0 0 19 18"><path d="M4.500 6.800l-3.300 3.800 3.300 3.800M8 6.800l-3.300 3.800 3.300 3.800M10.500 6.800l3.300 3.800-3.300 3.800M14 6.800l3.300 3.800-3.300 3.800" fill="none" stroke="#3f5c8e" stroke-width="1"/><path d="M5 0.500v8M1 4.500h8M2.200 1.700l5.600 5.600M7.800 1.700l-5.600 5.600" stroke="#f7b416" stroke-width="1.100"/></svg></div>
<div class="abs" style="left:161px;top:285px;font-size:11px;letter-spacing:-0.1px">Edit:</div>
<div class="abs" style="left:185px;top:280px;width:21px;height:20px;border:1px solid #c4c4c4;border-radius:3px;background:#f5f5f5"><svg class="ico" style="left:2px;top:2px" width="15" height="15" viewBox="0 0 15 15"><path d="M2.500 2.500l10 10M12.500 2.500l-10 10" stroke="#adadad" stroke-width="3.300" fill="none"/></svg></div>
<div class="abs" style="left:208px;top:280px;width:21px;height:20px;border:1px solid #c4c4c4;border-radius:3px;background:#f5f5f5"><svg class="ico" style="left:2px;top:3px" width="15" height="13" viewBox="0 0 15 13"><path d="M1.500 6.500l4 4.500 8-9.500" stroke="#adadad" stroke-width="3.200" fill="none"/></svg></div>
<div class="abs" style="left:230px;top:280px;width:1046px;height:20px;background:#fff;border:1px solid #abadb3;border-top-color:#8e9096"></div>
<div class="abs" style="left:16px;top:301px;width:1260px;height:713px;background:#fff;border:1px solid #828790"></div>
<div class="thead">
<div class="th sel" style="left:0px;width:150px"><span>Node Name</span></div>
<div class="th" style="left:150px;width:100px"><span>Direction</span></div>
<div class="th" style="left:250px;width:100px"><span>Location</span></div>
<div class="th" style="left:350px;width:100px"><span>I/O Bank</span></div>
<div class="th" style="left:450px;width:100px"><span style="letter-spacing:-0.5px">VREF Group</span></div>
<div class="th" style="left:550px;width:100px"><span>Fitter Location</span></div>
<div class="th" style="left:650px;width:100px"><span>I/O Standard</span></div>
<div class="th" style="left:750px;width:100px"><span>Reserved</span></div>
<div class="th" style="left:850px;width:100px"><span>Current Strength</span></div>
<div class="th" style="left:950px;width:100px"><span>Slew Rate</span></div>
<div class="th" style="left:1050px;width:100px"><span style="letter-spacing:-0.25px">Differential Pair</span></div>
</div>
<div class="tr" style="top:323px;background:#edf3ec">
<svg class="ic" width="18" height="16"><use href="#iin"/></svg><span class="nm" style="letter-spacing:-0.65px">CLOCK_50</span>
<span class="td" style="left:149px;width:100px">Input</span>
<span class="td" style="left:249px;width:100px;letter-spacing:-0.25px">PIN_Y2</span>
<span class="td" style="left:349px;width:100px">2</span>
<span class="td" style="left:449px;width:100px;letter-spacing:-0.55px">B2_N0</span>
<span class="td" style="left:549px;width:100px;letter-spacing:-0.25px">PIN_Y2</span>
<span class="td" style="left:649px;width:100px">2.5 V (default)</span>
<span class="td" style="left:749px;width:100px"></span>
<span class="td" style="left:849px;width:100px">8mA (default)</span>
<span class="td" style="left:949px;width:100px"></span>
<span class="td" style="left:1049px;width:100px"></span>
</div>
<div class="tr" style="top:339px;background:#ffffff">
<svg class="ic" width="18" height="16"><use href="#iout"/></svg><span class="nm">HEX0[7]</span>
<span class="td" style="left:149px;width:100px">Output</span>
<span class="td" style="left:249px;width:100px;letter-spacing:-0.25px"></span>
<span class="td" style="left:349px;width:100px"></span>
<span class="td" style="left:449px;width:100px;letter-spacing:-0.55px"></span>
<span class="td" style="left:549px;width:100px;letter-spacing:-0.25px">PIN_F12</span>
<span class="td" style="left:649px;width:100px">2.5 V (default)</span>
<span class="td" style="left:749px;width:100px"></span>
<span class="td" style="left:849px;width:100px">8mA (default)</span>
<span class="td" style="left:949px;width:100px">2 (default)</span>
<span class="td" style="left:1049px;width:100px"></span>
</div>
<div class="tr" style="top:355px;background:#f5dfcf">
<svg class="ic" width="18" height="16"><use href="#iout"/></svg><span class="nm">HEX0[6]</span>
<span class="td" style="left:149px;width:100px">Output</span>
<span class="td" style="left:249px;width:100px;letter-spacing:-0.25px">PIN_H22</span>
<span class="td" style="left:349px;width:100px">6</span>
<span class="td" style="left:449px;width:100px;letter-spacing:-0.55px">B6_N0</span>
<span class="td" style="left:549px;width:100px;letter-spacing:-0.25px">PIN_H22</span>
<span class="td" style="left:649px;width:100px">2.5 V (default)</span>
<span class="td" style="left:749px;width:100px"></span>
<span class="td" style="left:849px;width:100px">8mA (default)</span>
<span class="td" style="left:949px;width:100px">2 (default)</span>
<span class="td" style="left:1049px;width:100px"></span>
</div>
<div class="tr" style="top:371px;background:#f5dfcf">
<svg class="ic" width="18" height="16"><use href="#iout"/></svg><span class="nm">HEX0[5]</span>
<span class="td" style="left:149px;width:100px">Output</span>
<span class="td" style="left:249px;width:100px;letter-spacing:-0.25px">PIN_J22</span>
<span class="td" style="left:349px;width:100px">6</span>
<span class="td" style="left:449px;width:100px;letter-spacing:-0.55px">B6_N0</span>
<span class="td" style="left:549px;width:100px;letter-spacing:-0.25px">PIN_J22</span>
<span class="td" style="left:649px;width:100px">2.5 V (default)</span>
<span class="td" style="left:749px;width:100px"></span>
<span class="td" style="left:849px;width:100px">8mA (default)</span>
<span class="td" style="left:949px;width:100px">2 (default)</span>
<span class="td" style="left:1049px;width:100px"></span>
</div>
<div class="tr" style="top:387px;background:#f5dfcf">
<svg class="ic" width="18" height="16"><use href="#iout"/></svg><span class="nm">HEX0[4]</span>
<span class="td" style="left:149px;width:100px">Output</span>
<span class="td" style="left:249px;width:100px;letter-spacing:-0.25px">PIN_L25</span>
<span class="td" style="left:349px;width:100px">6</span>
<span class="td" style="left:449px;width:100px;letter-spacing:-0.55px">B6_N1</span>
<span class="td" style="left:549px;width:100px;letter-spacing:-0.25px">PIN_L25</span>
<span class="td" style="left:649px;width:100px">2.5 V (default)</span>
<span class="td" style="left:749px;width:100px"></span>
<span class="td" style="left:849px;width:100px">8mA (default)</span>
<span class="td" style="left:949px;width:100px">2 (default)</span>
<span class="td" style="left:1049px;width:100px"></span>
</div>
<div class="tr" style="top:403px;background:#f5dfcf">
<svg class="ic" width="18" height="16"><use href="#iout"/></svg><span class="nm">HEX0[3]</span>
<span class="td" style="left:149px;width:100px">Output</span>
<span class="td" style="left:249px;width:100px;letter-spacing:-0.25px">PIN_L26</span>
<span class="td" style="left:349px;width:100px">6</span>
<span class="td" style="left:449px;width:100px;letter-spacing:-0.55px">B6_N1</span>
<span class="td" style="left:549px;width:100px;letter-spacing:-0.25px">PIN_L26</span>
<span class="td" style="left:649px;width:100px">2.5 V (default)</span>
<span class="td" style="left:749px;width:100px"></span>
<span class="td" style="left:849px;width:100px">8mA (default)</span>
<span class="td" style="left:949px;width:100px">2 (default)</span>
<span class="td" style="left:1049px;width:100px"></span>
</div>
<div class="tr" style="top:419px;background:#e4fdcd">
<svg class="ic" width="18" height="16"><use href="#iout"/></svg><span class="nm">HEX0[2]</span>
<span class="td" style="left:149px;width:100px">Output</span>
<span class="td" style="left:249px;width:100px;letter-spacing:-0.25px">PIN_E17</span>
<span class="td" style="left:349px;width:100px">7</span>
<span class="td" style="left:449px;width:100px;letter-spacing:-0.55px">B7_N2</span>
<span class="td" style="left:549px;width:100px;letter-spacing:-0.25px">PIN_E17</span>
<span class="td" style="left:649px;width:100px">2.5 V (default)</span>
<span class="td" style="left:749px;width:100px"></span>
<span class="td" style="left:849px;width:100px">8mA (default)</span>
<span class="td" style="left:949px;width:100px">2 (default)</span>
<span class="td" style="left:1049px;width:100px"></span>
</div>
<div class="tr" style="top:435px;background:#e4fdcd">
<svg class="ic" width="18" height="16"><use href="#iout"/></svg><span class="nm">HEX0[1]</span>
<span class="td" style="left:149px;width:100px">Output</span>
<span class="td" style="left:249px;width:100px;letter-spacing:-0.25px">PIN_F22</span>
<span class="td" style="left:349px;width:100px">7</span>
<span class="td" style="left:449px;width:100px;letter-spacing:-0.55px">B7_N0</span>
<span class="td" style="left:549px;width:100px;letter-spacing:-0.25px">PIN_F22</span>
<span class="td" style="left:649px;width:100px">2.5 V (default)</span>
<span class="td" style="left:749px;width:100px"></span>
<span class="td" style="left:849px;width:100px">8mA (default)</span>
<span class="td" style="left:949px;width:100px">2 (default)</span>
<span class="td" style="left:1049px;width:100px"></span>
</div>
<div class="tr" style="top:451px;background:#e4fdcd">
<svg class="ic" width="18" height="16"><use href="#iout"/></svg><span class="nm">HEX0[0]</span>
<span class="td" style="left:149px;width:100px">Output</span>
<span class="td" style="left:249px;width:100px;letter-spacing:-0.25px">PIN_G18</span>
<span class="td" style="left:349px;width:100px">7</span>
<span class="td" style="left:449px;width:100px;letter-spacing:-0.55px">B7_N2</span>
<span class="td" style="left:549px;width:100px;letter-spacing:-0.25px">PIN_G18</span>
<span class="td" style="left:649px;width:100px">2.5 V (default)</span>
<span class="td" style="left:749px;width:100px"></span>
<span class="td" style="left:849px;width:100px">8mA (default)</span>
<span class="td" style="left:949px;width:100px">2 (default)</span>
<span class="td" style="left:1049px;width:100px"></span>
</div>
<div class="tr" style="top:467px;background:#ffffff">
<svg class="ic" width="18" height="16"><use href="#iout"/></svg><span class="nm">HEX1[7]</span>
<span class="td" style="left:149px;width:100px">Output</span>
<span class="td" style="left:249px;width:100px;letter-spacing:-0.25px"></span>
<span class="td" style="left:349px;width:100px"></span>
<span class="td" style="left:449px;width:100px;letter-spacing:-0.55px"></span>
<span class="td" style="left:549px;width:100px;letter-spacing:-0.25px">PIN_AH17</span>
<span class="td" style="left:649px;width:100px">2.5 V (default)</span>
<span class="td" style="left:749px;width:100px"></span>
<span class="td" style="left:849px;width:100px">8mA (default)</span>
<span class="td" style="left:949px;width:100px">2 (default)</span>
<span class="td" style="left:1049px;width:100px"></span>
</div>
<div class="tr" style="top:483px;background:#e5e4cc">
<svg class="ic" width="18" height="16"><use href="#iout"/></svg><span class="nm">HEX1[6]</span>
<span class="td" style="left:149px;width:100px">Output</span>
<span class="td" style="left:249px;width:100px;letter-spacing:-0.25px">PIN_U24</span>
<span class="td" style="left:349px;width:100px">5</span>
<span class="td" style="left:449px;width:100px;letter-spacing:-0.55px">B5_N0</span>
<span class="td" style="left:549px;width:100px;letter-spacing:-0.25px">PIN_U24</span>
<span class="td" style="left:649px;width:100px">2.5 V (default)</span>
<span class="td" style="left:749px;width:100px"></span>
<span class="td" style="left:849px;width:100px">8mA (default)</span>
<span class="td" style="left:949px;width:100px">2 (default)</span>
<span class="td" style="left:1049px;width:100px"></span>
</div>
<div class="tr" style="top:499px;background:#e5e4cc">
<svg class="ic" width="18" height="16"><use href="#iout"/></svg><span class="nm">HEX1[5]</span>
<span class="td" style="left:149px;width:100px">Output</span>
<span class="td" style="left:249px;width:100px;letter-spacing:-0.25px">PIN_U23</span>
<span class="td" style="left:349px;width:100px">5</span>
<span class="td" style="left:449px;width:100px;letter-spacing:-0.55px">B5_N1</span>
<span class="td" style="left:549px;width:100px;letter-spacing:-0.25px">PIN_U23</span>
<span class="td" style="left:649px;width:100px">2.5 V (default)</span>
<span class="td" style="left:749px;width:100px"></span>
<span class="td" style="left:849px;width:100px">8mA (default)</span>
<span class="td" style="left:949px;width:100px">2 (default)</span>
<span class="td" style="left:1049px;width:100px"></span>
</div>
<div class="tr" style="top:515px;background:#e5e4cc">
<svg class="ic" width="18" height="16"><use href="#iout"/></svg><span class="nm">HEX1[4]</span>
<span class="td" style="left:149px;width:100px">Output</span>
<span class="td" style="left:249px;width:100px;letter-spacing:-0.25px">PIN_W25</span>
<span class="td" style="left:349px;width:100px">5</span>
<span class="td" style="left:449px;width:100px;letter-spacing:-0.55px">B5_N1</span>
<span class="td" style="left:549px;width:100px;letter-spacing:-0.25px">PIN_W25</span>
<span class="td" style="left:649px;width:100px">2.5 V (default)</span>
<span class="td" style="left:749px;width:100px"></span>
<span class="td" style="left:849px;width:100px">8mA (default)</span>
<span class="td" style="left:949px;width:100px">2 (default)</span>
<span class="td" style="left:1049px;width:100px"></span>
</div>
<div class="tr" style="top:531px;background:#e5e4cc">
<svg class="ic" width="18" height="16"><use href="#iout"/></svg><span class="nm">HEX1[3]</span>
<span class="td" style="left:149px;width:100px">Output</span>
<span class="td" style="left:249px;width:100px;letter-spacing:-0.25px">PIN_W22</span>
<span class="td" style="left:349px;width:100px">5</span>
<span class="td" style="left:449px;width:100px;letter-spacing:-0.55px">B5_N0</span>
<span class="td" style="left:549px;width:100px;letter-spacing:-0.25px">PIN_W22</span>
<span class="td" style="left:649px;width:100px">2.5 V (default)</span>
<span class="td" style="left:749px;width:100px"></span>
<span class="td" style="left:849px;width:100px">8mA (default)</span>
<span class="td" style="left:949px;width:100px">2 (default)</span>
<span class="td" style="left:1049px;width:100px"></span>
</div>
<div class="tr" style="top:547px;background:#e5e4cc">
<svg class="ic" width="18" height="16"><use href="#iout"/></svg><span class="nm">HEX1[2]</span>
<span class="td" style="left:149px;width:100px">Output</span>
<span class="td" style="left:249px;width:100px;letter-spacing:-0.25px">PIN_W21</span>
<span class="td" style="left:349px;width:100px">5</span>
<span class="td" style="left:449px;width:100px;letter-spacing:-0.55px">B5_N1</span>
<span class="td" style="left:549px;width:100px;letter-spacing:-0.25px">PIN_W21</span>
<span class="td" style="left:649px;width:100px">2.5 V (default)</span>
<span class="td" style="left:749px;width:100px"></span>
<span class="td" style="left:849px;width:100px">8mA (default)</span>
<span class="td" style="left:949px;width:100px">2 (default)</span>
<span class="td" style="left:1049px;width:100px"></span>
</div>
<div class="tr" style="top:563px;background:#e5e4cc">
<svg class="ic" width="18" height="16"><use href="#iout"/></svg><span class="nm">HEX1[1]</span>
<span class="td" style="left:149px;width:100px">Output</span>
<span class="td" style="left:249px;width:100px;letter-spacing:-0.25px">PIN_Y22</span>
<span class="td" style="left:349px;width:100px">5</span>
<span class="td" style="left:449px;width:100px;letter-spacing:-0.55px">B5_N0</span>
<span class="td" style="left:549px;width:100px;letter-spacing:-0.25px">PIN_Y22</span>
<span class="td" style="left:649px;width:100px">2.5 V (default)</span>
<span class="td" style="left:749px;width:100px"></span>
<span class="td" style="left:849px;width:100px">8mA (default)</span>
<span class="td" style="left:949px;width:100px">2 (default)</span>
<span class="td" style="left:1049px;width:100px"></span>
</div>
<div class="tr" style="top:579px;background:#f5dfcf">
<svg class="ic" width="18" height="16"><use href="#iout"/></svg><span class="nm">HEX1[0]</span>
<span class="td" style="left:149px;width:100px">Output</span>
<span class="td" style="left:249px;width:100px;letter-spacing:-0.25px">PIN_M24</span>
<span class="td" style="left:349px;width:100px">6</span>
<span class="td" style="left:449px;width:100px;letter-spacing:-0.55px">B6_N2</span>
<span class="td" style="left:549px;width:100px;letter-spacing:-0.25px">PIN_M24</span>
<span class="td" style="left:649px;width:100px">2.5 V (default)</span>
<span class="td" style="left:749px;width:100px"></span>
<span class="td" style="left:849px;width:100px">8mA (default)</span>
<span class="td" style="left:949px;width:100px">2 (default)</span>
<span class="td" style="left:1049px;width:100px"></span>
</div>
<div class="tr" style="top:595px;background:#ffffff">
<svg class="ic" width="18" height="16"><use href="#iout"/></svg><span class="nm">HEX2[7]</span>
<span class="td" style="left:149px;width:100px">Output</span>
<span class="td" style="left:249px;width:100px;letter-spacing:-0.25px"></span>
<span class="td" style="left:349px;width:100px"></span>
<span class="td" style="left:449px;width:100px;letter-spacing:-0.55px"></span>
<span class="td" style="left:549px;width:100px;letter-spacing:-0.25px">PIN_AD15</span>
<span class="td" style="left:649px;width:100px">2.5 V (default)</span>
<span class="td" style="left:749px;width:100px"></span>
<span class="td" style="left:849px;width:100px">8mA (default)</span>
<span class="td" style="left:949px;width:100px">2 (default)</span>
<span class="td" style="left:1049px;width:100px"></span>
</div>
<div class="tr" style="top:611px;background:#e5e4cc">
<svg class="ic" width="18" height="16"><use href="#iout"/></svg><span class="nm">HEX2[6]</span>
<span class="td" style="left:149px;width:100px">Output</span>
<span class="td" style="left:249px;width:100px;letter-spacing:-0.25px">PIN_W28</span>
<span class="td" style="left:349px;width:100px">5</span>
<span class="td" style="left:449px;width:100px;letter-spacing:-0.55px">B5_N1</span>
<span class="td" style="left:549px;width:100px;letter-spacing:-0.25px">PIN_W28</span>
<span class="td" style="left:649px;width:100px">2.5 V (default)</span>
<span class="td" style="left:749px;width:100px"></span>
<span class="td" style="left:849px;width:100px">8mA (default)</span>
<span class="td" style="left:949px;width:100px">2 (default)</span>
<span class="td" style="left:1049px;width:100px"></span>
</div>
<div class="tr" style="top:627px;background:#e5e4cc">
<svg class="ic" width="18" height="16"><use href="#iout"/></svg><span class="nm">HEX2[5]</span>
<span class="td" style="left:149px;width:100px">Output</span>
<span class="td" style="left:249px;width:100px;letter-spacing:-0.25px">PIN_W27</span>
<span class="td" style="left:349px;width:100px">5</span>
<span class="td" style="left:449px;width:100px;letter-spacing:-0.55px">B5_N1</span>
<span class="td" style="left:549px;width:100px;letter-spacing:-0.25px">PIN_W27</span>
<span class="td" style="left:649px;width:100px">2.5 V (default)</span>
<span class="td" style="left:749px;width:100px"></span>
<span class="td" style="left:849px;width:100px">8mA (default)</span>
<span class="td" style="left:949px;width:100px">2 (default)</span>
<span class="td" style="left:1049px;width:100px"></span>
</div>
<div class="tr" style="top:643px;background:#e5e4cc">
<svg class="ic" width="18" height="16"><use href="#iout"/></svg><span class="nm">HEX2[4]</span>
<span class="td" style="left:149px;width:100px">Output</span>
<span class="td" style="left:249px;width:100px;letter-spacing:-0.25px">PIN_Y26</span>
<span class="td" style="left:349px;width:100px">5</span>
<span class="td" style="left:449px;width:100px;letter-spacing:-0.55px">B5_N1</span>
<span class="td" style="left:549px;width:100px;letter-spacing:-0.25px">PIN_Y26</span>
<span class="td" style="left:649px;width:100px">2.5 V (default)</span>
<span class="td" style="left:749px;width:100px"></span>
<span class="td" style="left:849px;width:100px">8mA (default)</span>
<span class="td" style="left:949px;width:100px">2 (default)</span>
<span class="td" style="left:1049px;width:100px"></span>
</div>
<div class="tr" style="top:659px;background:#e5e4cc">
<svg class="ic" width="18" height="16"><use href="#iout"/></svg><span class="nm">HEX2[3]</span>
<span class="td" style="left:149px;width:100px">Output</span>
<span class="td" style="left:249px;width:100px;letter-spacing:-0.25px">PIN_W26</span>
<span class="td" style="left:349px;width:100px">5</span>
<span class="td" style="left:449px;width:100px;letter-spacing:-0.55px">B5_N1</span>
<span class="td" style="left:549px;width:100px;letter-spacing:-0.25px">PIN_W26</span>
<span class="td" style="left:649px;width:100px">2.5 V (default)</span>
<span class="td" style="left:749px;width:100px"></span>
<span class="td" style="left:849px;width:100px">8mA (default)</span>
<span class="td" style="left:949px;width:100px">2 (default)</span>
<span class="td" style="left:1049px;width:100px"></span>
</div>
<div class="tr" style="top:675px;background:#e5e4cc">
<svg class="ic" width="18" height="16"><use href="#iout"/></svg><span class="nm">HEX2[2]</span>
<span class="td" style="left:149px;width:100px">Output</span>
<span class="td" style="left:249px;width:100px;letter-spacing:-0.25px">PIN_Y25</span>
<span class="td" style="left:349px;width:100px">5</span>
<span class="td" style="left:449px;width:100px;letter-spacing:-0.55px">B5_N1</span>
<span class="td" style="left:549px;width:100px;letter-spacing:-0.25px">PIN_Y25</span>
<span class="td" style="left:649px;width:100px">2.5 V (default)</span>
<span class="td" style="left:749px;width:100px"></span>
<span class="td" style="left:849px;width:100px">8mA (default)</span>
<span class="td" style="left:949px;width:100px">2 (default)</span>
<span class="td" style="left:1049px;width:100px"></span>
</div>
<div class="tr" style="top:691px;background:#e5e4cc">
<svg class="ic" width="18" height="16"><use href="#iout"/></svg><span class="nm">HEX2[1]</span>
<span class="td" style="left:149px;width:100px">Output</span>
<span class="td" style="left:249px;width:100px;letter-spacing:-0.25px">PIN_AA26</span>
<span class="td" style="left:349px;width:100px">5</span>
<span class="td" style="left:449px;width:100px;letter-spacing:-0.55px">B5_N1</span>
<span class="td" style="left:549px;width:100px;letter-spacing:-0.25px">PIN_AA26</span>
<span class="td" style="left:649px;width:100px">2.5 V (default)</span>
<span class="td" style="left:749px;width:100px"></span>
<span class="td" style="left:849px;width:100px">8mA (default)</span>
<span class="td" style="left:949px;width:100px">2 (default)</span>
<span class="td" style="left:1049px;width:100px"></span>
</div>
<div class="tr" style="top:707px;background:#e5e4cc">
<svg class="ic" width="18" height="16"><use href="#iout"/></svg><span class="nm">HEX2[0]</span>
<span class="td" style="left:149px;width:100px">Output</span>
<span class="td" style="left:249px;width:100px;letter-spacing:-0.25px">PIN_AA25</span>
<span class="td" style="left:349px;width:100px">5</span>
<span class="td" style="left:449px;width:100px;letter-spacing:-0.55px">B5_N1</span>
<span class="td" style="left:549px;width:100px;letter-spacing:-0.25px">PIN_AA25</span>
<span class="td" style="left:649px;width:100px">2.5 V (default)</span>
<span class="td" style="left:749px;width:100px"></span>
<span class="td" style="left:849px;width:100px">8mA (default)</span>
<span class="td" style="left:949px;width:100px">2 (default)</span>
<span class="td" style="left:1049px;width:100px"></span>
</div>
<div class="tr" style="top:723px;background:#ffffff">
<svg class="ic" width="18" height="16"><use href="#iout"/></svg><span class="nm">HEX3[7]</span>
<span class="td" style="left:149px;width:100px">Output</span>
<span class="td" style="left:249px;width:100px;letter-spacing:-0.25px"></span>
<span class="td" style="left:349px;width:100px"></span>
<span class="td" style="left:449px;width:100px;letter-spacing:-0.55px"></span>
<span class="td" style="left:549px;width:100px;letter-spacing:-0.25px">PIN_AC26</span>
<span class="td" style="left:649px;width:100px">2.5 V (default)</span>
<span class="td" style="left:749px;width:100px"></span>
<span class="td" style="left:849px;width:100px">8mA (default)</span>
<span class="td" style="left:949px;width:100px">2 (default)</span>
<span class="td" style="left:1049px;width:100px"></span>
</div>
<div class="tr" style="top:739px;background:#ffccff">
<svg class="ic" width="18" height="16"><use href="#iout"/></svg><span class="nm">HEX3[6]</span>
<span class="td" style="left:149px;width:100px">Output</span>
<span class="td" style="left:249px;width:100px;letter-spacing:-0.25px">PIN_Y19</span>
<span class="td" style="left:349px;width:100px">4</span>
<span class="td" style="left:449px;width:100px;letter-spacing:-0.55px">B4_N0</span>
<span class="td" style="left:549px;width:100px;letter-spacing:-0.25px">PIN_Y19</span>
<span class="td" style="left:649px;width:100px">2.5 V (default)</span>
<span class="td" style="left:749px;width:100px"></span>
<span class="td" style="left:849px;width:100px">8mA (default)</span>
<span class="td" style="left:949px;width:100px">2 (default)</span>
<span class="td" style="left:1049px;width:100px"></span>
</div>
<div class="tr" style="top:755px;background:#ffccff">
<svg class="ic" width="18" height="16"><use href="#iout"/></svg><span class="nm">HEX3[5]</span>
<span class="td" style="left:149px;width:100px">Output</span>
<span class="td" style="left:249px;width:100px;letter-spacing:-0.25px">PIN_AF23</span>
<span class="td" style="left:349px;width:100px">4</span>
<span class="td" style="left:449px;width:100px;letter-spacing:-0.55px">B4_N0</span>
<span class="td" style="left:549px;width:100px;letter-spacing:-0.25px">PIN_AF23</span>
<span class="td" style="left:649px;width:100px">2.5 V (default)</span>
<span class="td" style="left:749px;width:100px"></span>
<span class="td" style="left:849px;width:100px">8mA (default)</span>
<span class="td" style="left:949px;width:100px">2 (default)</span>
<span class="td" style="left:1049px;width:100px"></span>
</div>
<div class="tr" style="top:771px;background:#ffccff">
<svg class="ic" width="18" height="16"><use href="#iout"/></svg><span class="nm">HEX3[4]</span>
<span class="td" style="left:149px;width:100px">Output</span>
<span class="td" style="left:249px;width:100px;letter-spacing:-0.25px">PIN_AD24</span>
<span class="td" style="left:349px;width:100px">4</span>
<span class="td" style="left:449px;width:100px;letter-spacing:-0.55px">B4_N0</span>
<span class="td" style="left:549px;width:100px;letter-spacing:-0.25px">PIN_AD24</span>
<span class="td" style="left:649px;width:100px">2.5 V (default)</span>
<span class="td" style="left:749px;width:100px"></span>
<span class="td" style="left:849px;width:100px">8mA (default)</span>
<span class="td" style="left:949px;width:100px">2 (default)</span>
<span class="td" style="left:1049px;width:100px"></span>
</div>
<div class="tr" style="top:787px;background:#ffccff">
<svg class="ic" width="18" height="16"><use href="#iout"/></svg><span class="nm">HEX3[3]</span>
<span class="td" style="left:149px;width:100px">Output</span>
<span class="td" style="left:249px;width:100px;letter-spacing:-0.25px">PIN_AA21</span>
<span class="td" style="left:349px;width:100px">4</span>
<span class="td" style="left:449px;width:100px;letter-spacing:-0.55px">B4_N0</span>
<span class="td" style="left:549px;width:100px;letter-spacing:-0.25px">PIN_AA21</span>
<span class="td" style="left:649px;width:100px">2.5 V (default)</span>
<span class="td" style="left:749px;width:100px"></span>
<span class="td" style="left:849px;width:100px">8mA (default)</span>
<span class="td" style="left:949px;width:100px">2 (default)</span>
<span class="td" style="left:1049px;width:100px"></span>
</div>
<div class="tr" style="top:803px;background:#ffccff">
<svg class="ic" width="18" height="16"><use href="#iout"/></svg><span class="nm">HEX3[2]</span>
<span class="td" style="left:149px;width:100px">Output</span>
<span class="td" style="left:249px;width:100px;letter-spacing:-0.25px">PIN_AB20</span>
<span class="td" style="left:349px;width:100px">4</span>
<span class="td" style="left:449px;width:100px;letter-spacing:-0.55px">B4_N0</span>
<span class="td" style="left:549px;width:100px;letter-spacing:-0.25px">PIN_AB20</span>
<span class="td" style="left:649px;width:100px">2.5 V (default)</span>
<span class="td" style="left:749px;width:100px"></span>
<span class="td" style="left:849px;width:100px">8mA (default)</span>
<span class="td" style="left:949px;width:100px">2 (default)</span>
<span class="td" style="left:1049px;width:100px"></span>
</div>
<div class="tr" style="top:819px;background:#e5e4cc">
<svg class="ic" width="18" height="16"><use href="#iout"/></svg><span class="nm">HEX3[1]</span>
<span class="td" style="left:149px;width:100px">Output</span>
<span class="td" style="left:249px;width:100px;letter-spacing:-0.25px">PIN_U21</span>
<span class="td" style="left:349px;width:100px">5</span>
<span class="td" style="left:449px;width:100px;letter-spacing:-0.55px">B5_N0</span>
<span class="td" style="left:549px;width:100px;letter-spacing:-0.25px">PIN_U21</span>
<span class="td" style="left:649px;width:100px">2.5 V (default)</span>
<span class="td" style="left:749px;width:100px"></span>
<span class="td" style="left:849px;width:100px">8mA (default)</span>
<span class="td" style="left:949px;width:100px">2 (default)</span>
<span class="td" style="left:1049px;width:100px"></span>
</div>
<div class="tr" style="top:835px;background:#e5e4cc">
<svg class="ic" width="18" height="16"><use href="#iout"/></svg><span class="nm">HEX3[0]</span>
<span class="td" style="left:149px;width:100px">Output</span>
<span class="td" style="left:249px;width:100px;letter-spacing:-0.25px">PIN_V21</span>
<span class="td" style="left:349px;width:100px">5</span>
<span class="td" style="left:449px;width:100px;letter-spacing:-0.55px">B5_N1</span>
<span class="td" style="left:549px;width:100px;letter-spacing:-0.25px">PIN_V21</span>
<span class="td" style="left:649px;width:100px">2.5 V (default)</span>
<span class="td" style="left:749px;width:100px"></span>
<span class="td" style="left:849px;width:100px">8mA (default)</span>
<span class="td" style="left:949px;width:100px">2 (default)</span>
<span class="td" style="left:1049px;width:100px"></span>
</div>
<div class="tr" style="top:851px;background:#ffffff">
<svg class="ic" width="18" height="16"><use href="#iout"/></svg><span class="nm">HEX4[7]</span>
<span class="td" style="left:149px;width:100px">Output</span>
<span class="td" style="left:249px;width:100px;letter-spacing:-0.25px"></span>
<span class="td" style="left:349px;width:100px"></span>
<span class="td" style="left:449px;width:100px;letter-spacing:-0.55px"></span>
<span class="td" style="left:549px;width:100px;letter-spacing:-0.25px">PIN_AB11</span>
<span class="td" style="left:649px;width:100px">2.5 V (default)</span>
<span class="td" style="left:749px;width:100px"></span>
<span class="td" style="left:849px;width:100px">8mA (default)</span>
<span class="td" style="left:949px;width:100px">2 (default)</span>
<span class="td" style="left:1049px;width:100px"></span>
</div>
<div class="tr" style="top:867px;background:#ffccff">
<svg class="ic" width="18" height="16"><use href="#iout"/></svg><span class="nm">HEX4[6]</span>
<span class="td" style="left:149px;width:100px">Output</span>
<span class="td" style="left:249px;width:100px;letter-spacing:-0.25px">PIN_AE18</span>
<span class="td" style="left:349px;width:100px">4</span>
<span class="td" style="left:449px;width:100px;letter-spacing:-0.55px">B4_N2</span>
<span class="td" style="left:549px;width:100px;letter-spacing:-0.25px">PIN_AE18</span>
<span class="td" style="left:649px;width:100px">2.5 V (default)</span>
<span class="td" style="left:749px;width:100px"></span>
<span class="td" style="left:849px;width:100px">8mA (default)</span>
<span class="td" style="left:949px;width:100px">2 (default)</span>
<span class="td" style="left:1049px;width:100px"></span>
</div>
<div class="tr" style="top:883px;background:#ffccff">
<svg class="ic" width="18" height="16"><use href="#iout"/></svg><span class="nm">HEX4[5]</span>
<span class="td" style="left:149px;width:100px">Output</span>
<span class="td" style="left:249px;width:100px;letter-spacing:-0.25px">PIN_AF19</span>
<span class="td" style="left:349px;width:100px">4</span>
<span class="td" style="left:449px;width:100px;letter-spacing:-0.55px">B4_N1</span>
<span class="td" style="left:549px;width:100px;letter-spacing:-0.25px">PIN_AF19</span>
<span class="td" style="left:649px;width:100px">2.5 V (default)</span>
<span class="td" style="left:749px;width:100px"></span>
<span class="td" style="left:849px;width:100px">8mA (default)</span>
<span class="td" style="left:949px;width:100px">2 (default)</span>
<span class="td" style="left:1049px;width:100px"></span>
</div>
<div class="tr" style="top:899px;background:#ffccff">
<svg class="ic" width="18" height="16"><use href="#iout"/></svg><span class="nm">HEX4[4]</span>
<span class="td" style="left:149px;width:100px">Output</span>
<span class="td" style="left:249px;width:100px;letter-spacing:-0.25px">PIN_AE19</span>
<span class="td" style="left:349px;width:100px">4</span>
<span class="td" style="left:449px;width:100px;letter-spacing:-0.55px">B4_N1</span>
<span class="td" style="left:549px;width:100px;letter-spacing:-0.25px">PIN_AE19</span>
<span class="td" style="left:649px;width:100px">2.5 V (default)</span>
<span class="td" style="left:749px;width:100px"></span>
<span class="td" style="left:849px;width:100px">8mA (default)</span>
<span class="td" style="left:949px;width:100px">2 (default)</span>
<span class="td" style="left:1049px;width:100px"></span>
</div>
<div class="tr" style="top:915px;background:#ffccff">
<svg class="ic" width="18" height="16"><use href="#iout"/></svg><span class="nm">HEX4[3]</span>
<span class="td" style="left:149px;width:100px">Output</span>
<span class="td" style="left:249px;width:100px;letter-spacing:-0.25px">PIN_AH21</span>
<span class="td" style="left:349px;width:100px">4</span>
<span class="td" style="left:449px;width:100px;letter-spacing:-0.55px">B4_N2</span>
<span class="td" style="left:549px;width:100px;letter-spacing:-0.25px">PIN_AH21</span>
<span class="td" style="left:649px;width:100px">2.5 V (default)</span>
<span class="td" style="left:749px;width:100px"></span>
<span class="td" style="left:849px;width:100px">8mA (default)</span>
<span class="td" style="left:949px;width:100px">2 (default)</span>
<span class="td" style="left:1049px;width:100px"></span>
</div>
<div class="tr" style="top:931px;background:#ffccff">
<svg class="ic" width="18" height="16"><use href="#iout"/></svg><span class="nm">HEX4[2]</span>
<span class="td" style="left:149px;width:100px">Output</span>
<span class="td" style="left:249px;width:100px;letter-spacing:-0.25px">PIN_AG21</span>
<span class="td" style="left:349px;width:100px">4</span>
<span class="td" style="left:449px;width:100px;letter-spacing:-0.55px">B4_N2</span>
<span class="td" style="left:549px;width:100px;letter-spacing:-0.25px">PIN_AG21</span>
<span class="td" style="left:649px;width:100px">2.5 V (default)</span>
<span class="td" style="left:749px;width:100px"></span>
<span class="td" style="left:849px;width:100px">8mA (default)</span>
<span class="td" style="left:949px;width:100px">2 (default)</span>
<span class="td" style="left:1049px;width:100px"></span>
</div>
<div class="tr" style="top:947px;background:#ffccff">
<svg class="ic" width="18" height="16"><use href="#iout"/></svg><span class="nm">HEX4[1]</span>
<span class="td" style="left:149px;width:100px">Output</span>
<span class="td" style="left:249px;width:100px;letter-spacing:-0.25px">PIN_AA19</span>
<span class="td" style="left:349px;width:100px">4</span>
<span class="td" style="left:449px;width:100px;letter-spacing:-0.55px">B4_N0</span>
<span class="td" style="left:549px;width:100px;letter-spacing:-0.25px">PIN_AA19</span>
<span class="td" style="left:649px;width:100px">2.5 V (default)</span>
<span class="td" style="left:749px;width:100px"></span>
<span class="td" style="left:849px;width:100px">8mA (default)</span>
<span class="td" style="left:949px;width:100px">2 (default)</span>
<span class="td" style="left:1049px;width:100px"></span>
</div>
<div class="tr" style="top:963px;background:#ffccff">
<svg class="ic" width="18" height="16"><use href="#iout"/></svg><span class="nm">HEX4[0]</span>
<span class="td" style="left:149px;width:100px">Output</span>
<span class="td" style="left:249px;width:100px;letter-spacing:-0.25px">PIN_AB19</span>
<span class="td" style="left:349px;width:100px">4</span>
<span class="td" style="left:449px;width:100px;letter-spacing:-0.55px">B4_N0</span>
<span class="td" style="left:549px;width:100px;letter-spacing:-0.25px">PIN_AB19</span>
<span class="td" style="left:649px;width:100px">2.5 V (default)</span>
<span class="td" style="left:749px;width:100px"></span>
<span class="td" style="left:849px;width:100px">8mA (default)</span>
<span class="td" style="left:949px;width:100px">2 (default)</span>
<span class="td" style="left:1049px;width:100px"></span>
</div>
<div class="tr" style="top:979px;background:#ffffff">
<svg class="ic" width="18" height="16"><use href="#iout"/></svg><span class="nm">HEX5[7]</span>
<span class="td" style="left:149px;width:100px">Output</span>
<span class="td" style="left:249px;width:100px;letter-spacing:-0.25px"></span>
<span class="td" style="left:349px;width:100px"></span>
<span class="td" style="left:449px;width:100px;letter-spacing:-0.55px"></span>
<span class="td" style="left:549px;width:100px;letter-spacing:-0.25px">PIN_E4</span>
<span class="td" style="left:649px;width:100px">2.5 V (default)</span>
<span class="td" style="left:749px;width:100px"></span>
<span class="td" style="left:849px;width:100px">8mA (default)</span>
<span class="td" style="left:949px;width:100px">2 (default)</span>
<span class="td" style="left:1049px;width:100px"></span>
</div>
<div class="tr" style="top:995px;background:#ffccff">
<svg class="ic" width="18" height="16"><use href="#iout"/></svg><span class="nm">HEX5[6]</span>
<span class="td" style="left:149px;width:100px">Output</span>
<span class="td" style="left:249px;width:100px;letter-spacing:-0.25px">PIN_AH18</span>
<span class="td" style="left:349px;width:100px">4</span>
<span class="td" style="left:449px;width:100px;letter-spacing:-0.55px">B4_N2</span>
<span class="td" style="left:549px;width:100px;letter-spacing:-0.25px">PIN_AH18</span>
<span class="td" style="left:649px;width:100px">2.5 V (default)</span>
<span class="td" style="left:749px;width:100px"></span>
<span class="td" style="left:849px;width:100px">8mA (default)</span>
<span class="td" style="left:949px;width:100px">2 (default)</span>
<span class="td" style="left:1049px;width:100px"></span>
</div>
<div class="tr part" style="top:1011px;height:2px;background:#ffccff">
<span class="td" style="left:149px;width:100px"></span>
<span class="td" style="left:249px;width:100px"></span>
<span class="td" style="left:349px;width:100px"></span>
<span class="td" style="left:449px;width:100px"></span>
<span class="td" style="left:549px;width:100px"></span>
<span class="td" style="left:649px;width:100px"></span>
<span class="td" style="left:749px;width:100px"></span>
<span class="td" style="left:849px;width:100px"></span>
<span class="td" style="left:949px;width:100px"></span>
<span class="td" style="left:1049px;width:100px"></span>
</div>
</body></html>
